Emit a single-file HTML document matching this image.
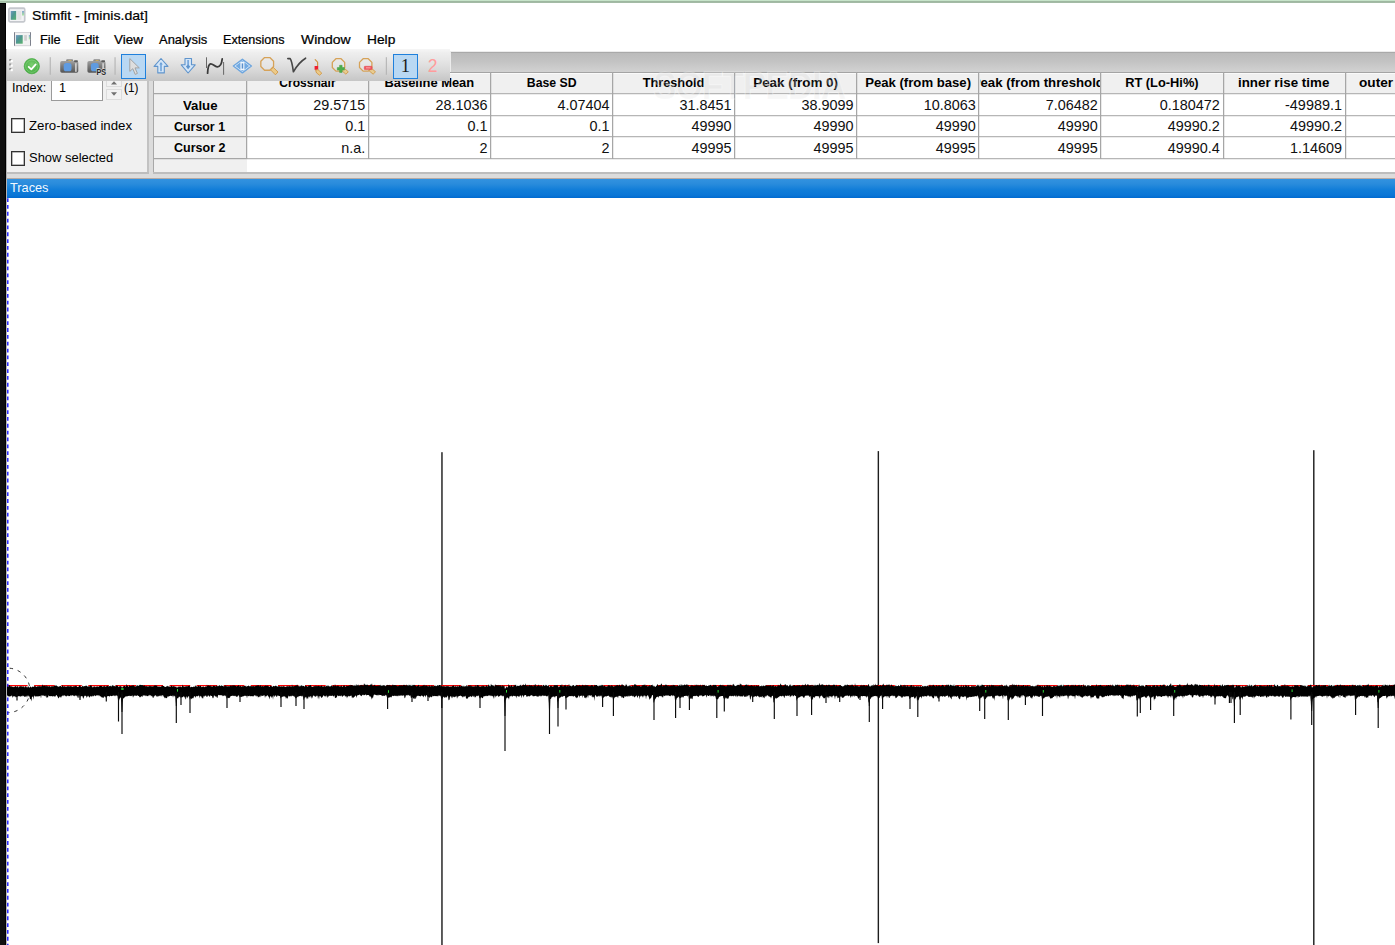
<!DOCTYPE html>
<html><head><meta charset="utf-8"><title>Stimfit - [minis.dat]</title>
<style>
html,body{margin:0;padding:0;}
body{width:1395px;height:945px;overflow:hidden;background:#fff;position:relative;font-family:"Liberation Sans",sans-serif;}
.t{position:absolute;white-space:nowrap;line-height:20px;height:20px;transform-origin:0 50%;font-family:"Liberation Sans",sans-serif;}
.a{position:absolute;}
svg{position:absolute;overflow:visible;}

</style></head>
<body>
<div class="a" style="left:0;top:0;width:1395px;height:1px;background:#c7e4ca;"></div><div class="a" style="left:0;top:1px;width:1395px;height:1px;background:#9fb8a1;"></div><div class="a" style="left:0;top:2px;width:1395px;height:1px;background:#a3bba5;"></div><div class="a" style="left:0;top:1px;width:6px;height:1px;background:#a6c0a8;"></div><div class="a" style="left:0;top:2px;width:6px;height:1px;background:#a9c6ac;"></div>
<div class="a" style="left:0;top:3px;width:6px;height:942px;background:#0f0f0f;border-right:1px solid #000;border-top:1px solid #000;box-sizing:border-box;"></div>
<div class="a" style="left:6px;top:49px;width:1px;height:896px;background:#b4b4b4;"></div>
<svg style="left:8px;top:7px" width="18" height="16" viewBox="0 0 18 16">
<defs><linearGradient id="gg" x1="0" y1="0" x2="1" y2="1"><stop offset="0" stop-color="#7399c2"/><stop offset="0.45" stop-color="#4f9692"/><stop offset="1" stop-color="#5bb36c"/></linearGradient>
<linearGradient id="gb" x1="0" y1="0" x2="0" y2="1"><stop offset="0" stop-color="#86a6d2"/><stop offset="0.7" stop-color="#a6dca8"/><stop offset="1" stop-color="#e8f4e8"/></linearGradient></defs>
<rect x="0.9" y="1.2" width="15.8" height="13.6" rx="1.2" fill="#f4f4f6" stroke="#c5c8cd" stroke-width="1.7"/>
<rect x="2" y="2.4" width="13.6" height="0.9" fill="#e2e4e8"/>
<rect x="2.7" y="4" width="5.5" height="8.8" fill="url(#gg)"/>
<rect x="9.2" y="4" width="4.2" height="8.8" fill="#e4e4e4"/>
<rect x="14" y="4" width="2.1" height="5.2" fill="url(#gb)"/>
</svg>
<div class="t" style="left:32.10px;top:6.23px;font-size:12.6px;color:#000;-webkit-text-stroke:0.22px #000;transform:scaleX(1.1195);">Stimfit - [minis.dat]</div>
<svg style="left:14px;top:32px" width="17" height="14" viewBox="0 0 17 14">
<rect x="0.5" y="0.5" width="16" height="13.2" fill="#f2f2f2" stroke="#d4d4d8" stroke-width="1"/>
<rect x="0" y="0.3" width="1" height="13.4" fill="#7c808c"/><rect x="16" y="0.3" width="1" height="13.4" fill="#7c808c"/>
<rect x="1.9" y="3.1" width="6.8" height="8.6" fill="url(#gg)"/>
<rect x="10.2" y="3.1" width="2.7" height="5.6" fill="#cfcfcf"/>
<rect x="14.8" y="3" width="1.4" height="5" fill="url(#gb)"/>
</svg>
<div class="t" style="left:40.00px;top:29.90px;font-size:12.4px;color:#000;-webkit-text-stroke:0.22px #000;transform:scaleX(1.0360);">File</div>
<div class="t" style="left:76.00px;top:29.90px;font-size:12.4px;color:#000;-webkit-text-stroke:0.22px #000;transform:scaleX(1.0764);">Edit</div>
<div class="t" style="left:114.30px;top:29.90px;font-size:12.4px;color:#000;-webkit-text-stroke:0.22px #000;transform:scaleX(1.0881);">View</div>
<div class="t" style="left:159.00px;top:29.90px;font-size:12.4px;color:#000;-webkit-text-stroke:0.22px #000;transform:scaleX(1.0461);">Analysis</div>
<div class="t" style="left:223.30px;top:29.90px;font-size:12.4px;color:#000;-webkit-text-stroke:0.22px #000;transform:scaleX(1.0172);">Extensions</div>
<div class="t" style="left:301.00px;top:29.90px;font-size:12.4px;color:#000;-webkit-text-stroke:0.22px #000;transform:scaleX(1.1269);">Window</div>
<div class="t" style="left:366.70px;top:29.90px;font-size:12.4px;color:#000;-webkit-text-stroke:0.22px #000;transform:scaleX(1.1097);">Help</div>
<div class="a" style="left:450px;top:51px;width:945px;height:21px;background:linear-gradient(#ececec 0,#ececec 1px,#a9a9a9 1px,#a9a9a9 2px,#bbbbbb 2px,#c3c3c3 50%,#d2d2d2 100%);border-left:1px solid #ececec;box-sizing:border-box;"></div>
<div class="a" style="left:7px;top:72px;width:1388px;height:107px;background:#dcdcdc;"></div>
<div class="a" style="left:7px;top:172px;width:1388px;height:2px;background:#bdbdbd;"></div>
<div class="a" style="left:7px;top:174px;width:1388px;height:4px;background:#dcdcdc;"></div>
<div class="a" style="left:7px;top:72px;width:140px;height:100px;background:#f0f0f0;border-right:2px solid #c2c2c2;"></div>
<div class="a" style="left:149px;top:172px;width:4px;height:2px;background:#dcdcdc;"></div><!-- gap patch -->
<div class="t" style="left:12.00px;top:77.70px;font-size:12.4px;color:#000;transform:scaleX(1.0184);">Index:</div>
<div class="a" style="left:51px;top:70px;width:52px;height:31px;background:#fff;border:1px solid #9a9a9a;box-sizing:border-box;"></div>
<div class="t" style="left:59.00px;top:77.63px;font-size:12.6px;color:#000;">1</div>
<div class="a" style="left:106px;top:72px;width:16px;height:15px;background:#f2f2f2;border:1px solid #dcdcdc;box-sizing:border-box;"></div>
<div class="a" style="left:106px;top:89px;width:16px;height:11px;background:#f2f2f2;border:1px solid #dcdcdc;box-sizing:border-box;"></div>
<svg style="left:106px;top:80px" width="16" height="20" viewBox="0 0 16 20"><path d="M5 4.5 L11 4.5 L8 1.2 Z" fill="#707070"/><path d="M5 12.3 L11 12.3 L8 15.8 Z" fill="#707070"/></svg>
<div class="t" style="left:124.40px;top:77.63px;font-size:12.6px;color:#000;transform:scaleX(0.9351);">(1)</div>
<div class="a" style="left:11px;top:118px;width:14px;height:15px;background:#fff;border:1px solid #333;box-shadow:inset 0 0 0 0.5px #777;box-sizing:border-box;"></div>
<div class="t" style="left:28.70px;top:115.67px;font-size:12.2px;color:#000;transform:scaleX(1.0870);">Zero-based index</div>
<div class="a" style="left:11px;top:151px;width:14px;height:15px;background:#fff;border:1px solid #333;box-shadow:inset 0 0 0 0.5px #777;box-sizing:border-box;"></div>
<div class="t" style="left:28.70px;top:148.37px;font-size:12.2px;color:#000;transform:scaleX(1.0624);">Show selected</div>
<div class="a" style="left:7px;top:178px;width:1388px;height:20px;background:linear-gradient(#3292e0 0,#2a8cdc 25%,#0f7cd8 60%,#0a76d6 85%,#006ad0 100%);border-top:1px solid #b4a9a4;box-sizing:border-box;"></div>
<div class="t" style="left:10.30px;top:177.70px;font-size:12.4px;color:#f2f8ff;transform:scaleX(1.0284);">Traces</div>
<div class="a" style="left:153px;top:72px;width:1242px;height:100.30000000000001px;background:#fff;overflow:hidden;" id="tbl">
<div class="a" style="left:0;top:0;width:1300px;height:21.599999999999994px;background:#f0f0f0;"></div>
<div class="a" style="left:0;top:0;width:93.5px;height:100px;background:#f0f0f0;"></div>
<div class="a" style="left:1px;top:1px;width:1300px;height:1px;background:#fafafa;"></div><!-- hdr highlight -->
<div class="a" style="left:0;top:0;width:1px;height:100px;background:#a8a8a8;"></div>
<div class="a" style="left:0;top:0;width:1300px;height:1px;background:#a4a4a4;"></div>
<div class="a" style="left:1px;top:21px;width:1300px;height:1px;background:#b6b6b6;"></div>
<div class="a" style="left:1px;top:21px;width:93px;height:1px;background:#a6a6a6;"></div>
<div class="a" style="left:1px;top:22px;width:1300px;height:1px;background:rgba(150,150,150,0.18);"></div>
<div class="a" style="left:1px;top:43px;width:1300px;height:1px;background:#b6b6b6;"></div>
<div class="a" style="left:1px;top:43px;width:93px;height:1px;background:#a6a6a6;"></div>
<div class="a" style="left:1px;top:44px;width:1300px;height:1px;background:rgba(150,150,150,0.18);"></div>
<div class="a" style="left:1px;top:64px;width:1300px;height:1px;background:#b6b6b6;"></div>
<div class="a" style="left:1px;top:64px;width:93px;height:1px;background:#a6a6a6;"></div>
<div class="a" style="left:1px;top:65px;width:1300px;height:1px;background:rgba(150,150,150,0.18);"></div>
<div class="a" style="left:1px;top:86px;width:1300px;height:1px;background:#b6b6b6;"></div>
<div class="a" style="left:1px;top:86px;width:93px;height:1px;background:#a6a6a6;"></div>
<div class="a" style="left:1px;top:87px;width:1300px;height:1px;background:rgba(150,150,150,0.18);"></div>
<div class="a" style="left:93px;top:0;width:1px;height:87px;background:#a6a6a6;"></div>
<div class="a" style="left:94px;top:0;width:1px;height:87px;background:rgba(150,150,150,0.2);"></div>
<div class="a" style="left:215px;top:0;width:1px;height:87px;background:#a6a6a6;"></div>
<div class="a" style="left:216px;top:0;width:1px;height:87px;background:rgba(150,150,150,0.2);"></div>
<div class="a" style="left:337px;top:0;width:1px;height:87px;background:#a6a6a6;"></div>
<div class="a" style="left:338px;top:0;width:1px;height:87px;background:rgba(150,150,150,0.2);"></div>
<div class="a" style="left:459px;top:0;width:1px;height:87px;background:#a6a6a6;"></div>
<div class="a" style="left:460px;top:0;width:1px;height:87px;background:rgba(150,150,150,0.2);"></div>
<div class="a" style="left:581px;top:0;width:1px;height:87px;background:#a6a6a6;"></div>
<div class="a" style="left:582px;top:0;width:1px;height:87px;background:rgba(150,150,150,0.2);"></div>
<div class="a" style="left:703px;top:0;width:1px;height:87px;background:#a6a6a6;"></div>
<div class="a" style="left:704px;top:0;width:1px;height:87px;background:rgba(150,150,150,0.2);"></div>
<div class="a" style="left:825px;top:0;width:1px;height:87px;background:#a6a6a6;"></div>
<div class="a" style="left:826px;top:0;width:1px;height:87px;background:rgba(150,150,150,0.2);"></div>
<div class="a" style="left:947px;top:0;width:1px;height:87px;background:#a6a6a6;"></div>
<div class="a" style="left:948px;top:0;width:1px;height:87px;background:rgba(150,150,150,0.2);"></div>
<div class="a" style="left:1070px;top:0;width:1px;height:87px;background:#a6a6a6;"></div>
<div class="a" style="left:1071px;top:0;width:1px;height:87px;background:rgba(150,150,150,0.2);"></div>
<div class="a" style="left:1192px;top:0;width:1px;height:87px;background:#a6a6a6;"></div>
<div class="a" style="left:1193px;top:0;width:1px;height:87px;background:rgba(150,150,150,0.2);"></div>
<div class="a" style="left:1314px;top:0;width:1px;height:87px;background:#a6a6a6;"></div>
<div class="a" style="left:1315px;top:0;width:1px;height:87px;background:rgba(150,150,150,0.2);"></div>
</div>
<div class="a" style="left:247.50px;top:73px;width:120.07px;height:19.60px;overflow:hidden;"><div class="t" style="left:31.56px;top:0.27px;width:56.96px;font-size:12.2px;font-weight:bold;transform-origin:50% 50%;transform:scaleX(0.9885);">Crosshair</div></div>
<div class="a" style="left:369.57px;top:73px;width:120.07px;height:19.60px;overflow:hidden;"><div class="t" style="left:17.66px;top:0.27px;width:84.76px;font-size:12.2px;font-weight:bold;transform-origin:50% 50%;transform:scaleX(1.0583);">Baseline Mean</div></div>
<div class="a" style="left:491.64px;top:73px;width:120.07px;height:19.60px;overflow:hidden;"><div class="t" style="left:35.28px;top:0.27px;width:49.50px;font-size:12.2px;font-weight:bold;transform-origin:50% 50%;transform:scaleX(1.0080);">Base SD</div></div>
<div class="a" style="left:613.71px;top:73px;width:120.07px;height:19.60px;overflow:hidden;"><div class="t" style="left:30.55px;top:0.27px;width:58.97px;font-size:12.2px;font-weight:bold;transform-origin:50% 50%;transform:scaleX(1.0463);">Threshold</div></div>
<div class="a" style="left:735.78px;top:73px;width:120.07px;height:19.60px;overflow:hidden;"><div class="t" style="left:21.39px;top:0.27px;width:77.29px;font-size:12.2px;font-weight:bold;transform-origin:50% 50%;transform:scaleX(1.0984);">Peak (from 0)</div></div>
<div class="a" style="left:857.85px;top:73px;width:120.07px;height:19.60px;overflow:hidden;"><div class="t" style="left:10.88px;top:0.27px;width:98.32px;font-size:12.2px;font-weight:bold;transform-origin:50% 50%;transform:scaleX(1.0782);">Peak (from base)</div></div>
<div class="a" style="left:979.92px;top:73px;width:120.07px;height:19.60px;overflow:hidden;"><div class="t" style="left:-3.01px;top:0.27px;width:126.09px;font-size:12.2px;font-weight:bold;transform-origin:50% 50%;transform:scaleX(1.0850);">Peak (from threshold)</div></div>
<div class="a" style="left:1101.99px;top:73px;width:120.07px;height:19.60px;overflow:hidden;"><div class="t" style="left:25.14px;top:0.27px;width:69.79px;font-size:12.2px;font-weight:bold;transform-origin:50% 50%;transform:scaleX(1.0531);">RT (Lo-Hi%)</div></div>
<div class="a" style="left:1224.06px;top:73px;width:120.07px;height:19.60px;overflow:hidden;"><div class="t" style="left:18.34px;top:0.27px;width:83.40px;font-size:12.2px;font-weight:bold;transform-origin:50% 50%;transform:scaleX(1.0959);">inner rise time</div></div>
<div class="a" style="left:1346.13px;top:73px;width:120.07px;height:19.60px;overflow:hidden;"><div class="t" style="left:18.00px;top:0.27px;width:84.07px;font-size:12.2px;font-weight:bold;transform-origin:50% 50%;transform:scaleX(1.1181);">outer rise time</div></div>
<div class="t" style="left:182.65px;top:95.67px;font-size:12.2px;color:#000;font-weight:bold;transform:scaleX(1.0854);">Value</div>
<div class="t" style="left:174.40px;top:117.07px;font-size:12.2px;color:#000;font-weight:bold;transform:scaleX(1.0185);">Cursor 1</div>
<div class="t" style="left:174.15px;top:138.27px;font-size:12.2px;color:#000;font-weight:bold;transform:scaleX(1.0285);">Cursor 2</div>
<div class="t" style="left:313.32px;top:94.91px;font-size:14.4px;color:#101010;">29.5715</div>
<div class="t" style="left:435.39px;top:94.91px;font-size:14.4px;color:#101010;">28.1036</div>
<div class="t" style="left:557.46px;top:94.91px;font-size:14.4px;color:#101010;">4.07404</div>
<div class="t" style="left:679.53px;top:94.91px;font-size:14.4px;color:#101010;">31.8451</div>
<div class="t" style="left:801.60px;top:94.91px;font-size:14.4px;color:#101010;">38.9099</div>
<div class="t" style="left:923.67px;top:94.91px;font-size:14.4px;color:#101010;">10.8063</div>
<div class="t" style="left:1045.74px;top:94.91px;font-size:14.4px;color:#101010;">7.06482</div>
<div class="t" style="left:1159.80px;top:94.91px;font-size:14.4px;color:#101010;">0.180472</div>
<div class="t" style="left:1285.08px;top:94.91px;font-size:14.4px;color:#101010;">-49989.1</div>
<div class="t" style="left:345.35px;top:116.31px;font-size:14.4px;color:#101010;">0.1</div>
<div class="t" style="left:467.42px;top:116.31px;font-size:14.4px;color:#101010;">0.1</div>
<div class="t" style="left:589.49px;top:116.31px;font-size:14.4px;color:#101010;">0.1</div>
<div class="t" style="left:691.54px;top:116.31px;font-size:14.4px;color:#101010;">49990</div>
<div class="t" style="left:813.61px;top:116.31px;font-size:14.4px;color:#101010;">49990</div>
<div class="t" style="left:935.68px;top:116.31px;font-size:14.4px;color:#101010;">49990</div>
<div class="t" style="left:1057.75px;top:116.31px;font-size:14.4px;color:#101010;">49990</div>
<div class="t" style="left:1167.81px;top:116.31px;font-size:14.4px;color:#101010;">49990.2</div>
<div class="t" style="left:1289.88px;top:116.31px;font-size:14.4px;color:#101010;">49990.2</div>
<div class="t" style="left:341.35px;top:137.51px;font-size:14.4px;color:#101010;">n.a.</div>
<div class="t" style="left:479.43px;top:137.51px;font-size:14.4px;color:#101010;">2</div>
<div class="t" style="left:601.50px;top:137.51px;font-size:14.4px;color:#101010;">2</div>
<div class="t" style="left:691.54px;top:137.51px;font-size:14.4px;color:#101010;">49995</div>
<div class="t" style="left:813.61px;top:137.51px;font-size:14.4px;color:#101010;">49995</div>
<div class="t" style="left:935.68px;top:137.51px;font-size:14.4px;color:#101010;">49995</div>
<div class="t" style="left:1057.75px;top:137.51px;font-size:14.4px;color:#101010;">49995</div>
<div class="t" style="left:1167.81px;top:137.51px;font-size:14.4px;color:#101010;">49990.4</div>
<div class="t" style="left:1289.88px;top:137.51px;font-size:14.4px;color:#101010;">1.14609</div>
<div class="t" style="left:653px;top:64px;height:44px;line-height:44px;font-size:38px;font-weight:bold;letter-spacing:-1.2px;color:rgba(170,170,170,0.10);-webkit-text-stroke:1.2px rgba(255,255,255,0.32);transform:scaleX(0.93);">SOFTPEDIA</div>
<svg style="left:0;top:0" width="1395" height="945" viewBox="0 0 1395 945"><rect x="441.05" y="452.2" width="1.8" height="493" fill="#4c4c4c"/><rect x="877.65" y="451.1" width="1.4" height="492" fill="#1e1e1e"/><rect x="1313.0" y="450.2" width="1.55" height="495" fill="#2e2e2e"/><path d="M7 685.6 H1395" stroke="#ff0000" stroke-width="1.2" stroke-dasharray="20.6 6.5" fill="none"/><clipPath id="cl"><rect x="7" y="198" width="1388" height="747"/></clipPath><circle cx="7.6" cy="690.4" r="22.3" fill="none" stroke="#1a1a1a" stroke-width="0.9" stroke-dasharray="3.4 4.8" clip-path="url(#cl)"/><path d="M7.8 198.15 V945" stroke="#1818ff" stroke-width="1.4" stroke-dasharray="3.8 3.04" fill="none"/><polygon fill="#000" points="7.0,686.9 7.5,686.5 8.0,686.4 8.5,687.1 9.0,685.1 9.5,685.0 10.0,686.2 10.5,685.9 11.0,687.0 11.5,685.8 12.0,687.1 12.5,686.4 13.0,687.2 13.5,687.0 14.0,686.8 14.5,687.0 15.0,686.2 15.5,686.2 16.0,686.1 16.5,687.3 17.0,686.5 17.5,686.3 18.0,686.2 18.5,687.4 19.0,687.2 19.5,686.6 20.0,685.8 20.5,686.5 21.0,686.3 21.5,686.0 22.0,687.3 22.5,686.4 23.0,686.3 23.5,686.8 24.0,686.3 24.5,687.6 25.0,687.0 25.5,686.2 26.0,686.0 26.5,687.3 27.0,687.3 27.5,687.6 28.0,686.2 28.5,686.4 29.0,687.6 29.5,687.7 30.0,686.6 30.5,686.4 31.0,687.3 31.5,687.6 32.0,686.9 32.5,686.6 33.0,686.8 33.5,687.0 34.0,686.4 34.5,686.3 35.0,685.6 35.5,686.5 36.0,686.5 36.5,687.1 37.0,686.9 37.5,686.1 38.0,686.4 38.5,686.4 39.0,685.2 39.5,686.2 40.0,686.6 40.5,685.9 41.0,686.8 41.5,685.9 42.0,686.3 42.5,684.2 43.0,685.5 43.5,686.3 44.0,685.2 44.5,685.8 45.0,685.7 45.5,685.5 46.0,686.7 46.5,684.8 47.0,686.8 47.5,686.1 48.0,685.7 48.5,686.5 49.0,686.8 49.5,686.1 50.0,685.8 50.5,686.9 51.0,687.2 51.5,686.0 52.0,686.3 52.5,686.6 53.0,686.0 53.5,686.5 54.0,686.0 54.5,685.6 55.0,685.7 55.5,685.5 56.0,685.5 56.5,685.5 57.0,685.8 57.5,686.6 58.0,686.2 58.5,687.2 59.0,686.0 59.5,686.5 60.0,686.3 60.5,685.7 61.0,686.3 61.5,687.1 62.0,686.6 62.5,685.0 63.0,686.1 63.5,686.5 64.0,686.8 64.5,686.0 65.0,686.4 65.5,686.8 66.0,686.5 66.5,686.7 67.0,686.6 67.5,685.5 68.0,687.0 68.5,685.9 69.0,685.5 69.5,686.8 70.0,686.2 70.5,686.3 71.0,685.9 71.5,686.5 72.0,686.4 72.5,687.0 73.0,686.6 73.5,686.6 74.0,685.9 74.5,686.3 75.0,686.4 75.5,685.5 76.0,686.2 76.5,685.6 77.0,686.9 77.5,687.0 78.0,687.0 78.5,686.8 79.0,686.2 79.5,684.9 80.0,685.8 80.5,685.8 81.0,686.9 81.5,687.0 82.0,686.4 82.5,685.5 83.0,686.5 83.5,686.4 84.0,685.9 84.5,685.9 85.0,686.6 85.5,685.5 86.0,686.0 86.5,685.6 87.0,685.9 87.5,686.9 88.0,685.8 88.5,686.7 89.0,686.2 89.5,686.6 90.0,685.9 90.5,685.6 91.0,684.8 91.5,686.1 92.0,686.5 92.5,687.3 93.0,687.5 93.5,686.3 94.0,687.2 94.5,686.2 95.0,686.3 95.5,687.2 96.0,686.9 96.5,686.7 97.0,685.9 97.5,686.8 98.0,686.6 98.5,686.9 99.0,686.4 99.5,686.1 100.0,686.0 100.5,685.8 101.0,686.3 101.5,686.0 102.0,685.8 102.5,687.1 103.0,686.7 103.5,685.7 104.0,687.1 104.5,685.6 105.0,685.8 105.5,686.9 106.0,686.5 106.5,686.2 107.0,685.8 107.5,686.0 108.0,685.5 108.5,686.5 109.0,686.4 109.5,686.1 110.0,686.1 110.5,686.2 111.0,685.2 111.5,686.4 112.0,686.6 112.5,684.8 113.0,685.4 113.5,685.5 114.0,686.5 114.5,685.9 115.0,685.8 115.5,686.8 116.0,685.5 116.5,685.8 117.0,685.1 117.5,685.7 118.0,686.2 118.5,687.2 119.0,686.4 119.5,686.2 120.0,686.5 120.5,686.1 121.0,686.3 121.5,686.7 122.0,687.8 122.5,687.3 123.0,686.7 123.5,686.3 124.0,685.9 124.5,685.9 125.0,685.7 125.5,686.8 126.0,686.6 126.5,683.7 127.0,686.1 127.5,685.3 128.0,686.1 128.5,686.9 129.0,686.3 129.5,684.7 130.0,685.9 130.5,686.0 131.0,686.0 131.5,685.6 132.0,685.9 132.5,685.2 133.0,685.6 133.5,685.3 134.0,685.8 134.5,686.2 135.0,686.4 135.5,686.3 136.0,686.7 136.5,685.8 137.0,685.1 137.5,685.4 138.0,685.7 138.5,686.1 139.0,685.3 139.5,685.3 140.0,684.6 140.5,685.1 141.0,685.1 141.5,685.1 142.0,685.2 142.5,685.1 143.0,685.3 143.5,686.3 144.0,685.1 144.5,685.5 145.0,686.0 145.5,686.1 146.0,686.7 146.5,685.7 147.0,686.2 147.5,686.4 148.0,686.5 148.5,686.7 149.0,685.3 149.5,686.0 150.0,686.6 150.5,685.7 151.0,686.4 151.5,685.9 152.0,686.8 152.5,686.4 153.0,685.8 153.5,686.5 154.0,686.0 154.5,685.5 155.0,685.3 155.5,685.5 156.0,685.6 156.5,685.8 157.0,685.6 157.5,686.7 158.0,686.6 158.5,687.0 159.0,686.0 159.5,686.8 160.0,687.0 160.5,686.6 161.0,686.9 161.5,685.9 162.0,685.5 162.5,685.7 163.0,686.0 163.5,685.9 164.0,686.1 164.5,686.8 165.0,686.9 165.5,687.0 166.0,686.8 166.5,686.6 167.0,686.1 167.5,685.8 168.0,686.7 168.5,686.0 169.0,687.1 169.5,686.6 170.0,686.3 170.5,687.2 171.0,685.4 171.5,685.6 172.0,686.2 172.5,686.8 173.0,685.9 173.5,685.9 174.0,686.8 174.5,686.1 175.0,687.0 175.5,686.8 176.0,686.6 176.5,687.7 177.0,686.7 177.5,687.6 178.0,687.4 178.5,686.3 179.0,686.9 179.5,686.3 180.0,687.1 180.5,686.3 181.0,686.9 181.5,687.2 182.0,686.4 182.5,684.6 183.0,686.6 183.5,686.5 184.0,686.0 184.5,686.8 185.0,687.3 185.5,686.1 186.0,686.5 186.5,685.8 187.0,687.1 187.5,686.1 188.0,686.0 188.5,686.1 189.0,685.8 189.5,685.6 190.0,686.5 190.5,687.5 191.0,687.0 191.5,686.8 192.0,687.0 192.5,687.0 193.0,687.3 193.5,686.3 194.0,686.9 194.5,687.0 195.0,685.5 195.5,685.6 196.0,686.8 196.5,686.5 197.0,685.5 197.5,687.1 198.0,686.2 198.5,685.5 199.0,685.4 199.5,686.6 200.0,686.2 200.5,685.6 201.0,686.2 201.5,687.2 202.0,687.1 202.5,687.0 203.0,686.3 203.5,686.4 204.0,687.0 204.5,687.1 205.0,687.2 205.5,686.0 206.0,687.0 206.5,686.5 207.0,684.4 207.5,686.3 208.0,685.3 208.5,685.5 209.0,685.6 209.5,686.1 210.0,685.4 210.5,685.4 211.0,686.7 211.5,686.5 212.0,685.6 212.5,686.9 213.0,686.3 213.5,685.7 214.0,685.6 214.5,686.3 215.0,685.5 215.5,686.6 216.0,686.4 216.5,685.1 217.0,686.4 217.5,686.1 218.0,686.1 218.5,686.3 219.0,685.2 219.5,685.0 220.0,686.3 220.5,686.1 221.0,685.6 221.5,685.6 222.0,685.6 222.5,686.1 223.0,686.0 223.5,686.8 224.0,685.3 224.5,686.4 225.0,685.3 225.5,685.3 226.0,686.5 226.5,686.2 227.0,685.0 227.5,686.6 228.0,686.7 228.5,686.1 229.0,686.3 229.5,686.5 230.0,685.6 230.5,685.4 231.0,686.1 231.5,685.3 232.0,686.5 232.5,685.0 233.0,685.8 233.5,685.4 234.0,685.1 234.5,685.8 235.0,685.2 235.5,686.0 236.0,686.0 236.5,686.5 237.0,686.0 237.5,685.8 238.0,686.2 238.5,685.1 239.0,685.0 239.5,686.5 240.0,686.3 240.5,685.5 241.0,686.6 241.5,686.8 242.0,686.3 242.5,686.5 243.0,685.3 243.5,686.5 244.0,686.0 244.5,685.7 245.0,686.2 245.5,686.3 246.0,685.3 246.5,686.9 247.0,686.2 247.5,686.0 248.0,686.3 248.5,685.2 249.0,686.1 249.5,686.0 250.0,686.9 250.5,685.6 251.0,686.2 251.5,686.2 252.0,686.1 252.5,686.6 253.0,685.8 253.5,685.9 254.0,686.5 254.5,686.4 255.0,685.6 255.5,685.9 256.0,686.3 256.5,685.5 257.0,685.5 257.5,685.2 258.0,685.8 258.5,685.2 259.0,685.1 259.5,686.4 260.0,685.7 260.5,685.3 261.0,685.4 261.5,686.5 262.0,686.5 262.5,686.1 263.0,685.9 263.5,686.4 264.0,686.2 264.5,686.0 265.0,686.1 265.5,685.5 266.0,685.5 266.5,685.7 267.0,685.9 267.5,685.6 268.0,685.7 268.5,685.8 269.0,687.1 269.5,687.1 270.0,686.1 270.5,685.4 271.0,686.2 271.5,685.9 272.0,686.4 272.5,687.0 273.0,686.2 273.5,685.7 274.0,686.2 274.5,686.3 275.0,686.1 275.5,685.8 276.0,685.5 276.5,686.4 277.0,685.7 277.5,686.8 278.0,686.7 278.5,685.7 279.0,686.8 279.5,685.9 280.0,686.3 280.5,686.4 281.0,686.9 281.5,685.7 282.0,686.9 282.5,686.3 283.0,686.7 283.5,686.2 284.0,685.6 284.5,686.8 285.0,686.9 285.5,686.9 286.0,686.8 286.5,686.8 287.0,685.6 287.5,686.8 288.0,685.4 288.5,686.9 289.0,685.5 289.5,686.0 290.0,686.4 290.5,686.2 291.0,686.5 291.5,686.7 292.0,684.3 292.5,686.0 293.0,686.5 293.5,686.2 294.0,685.9 294.5,685.9 295.0,686.3 295.5,685.7 296.0,685.1 296.5,686.0 297.0,684.5 297.5,684.9 298.0,686.2 298.5,685.8 299.0,686.4 299.5,686.4 300.0,685.1 300.5,686.3 301.0,686.3 301.5,685.2 302.0,684.9 302.5,686.2 303.0,686.0 303.5,685.8 304.0,686.3 304.5,686.4 305.0,686.6 305.5,685.1 306.0,685.8 306.5,686.3 307.0,686.1 307.5,686.8 308.0,686.7 308.5,685.1 309.0,686.3 309.5,685.3 310.0,685.3 310.5,685.1 311.0,685.5 311.5,686.6 312.0,687.0 312.5,687.0 313.0,686.6 313.5,686.4 314.0,686.3 314.5,686.3 315.0,685.8 315.5,685.6 316.0,686.8 316.5,685.5 317.0,686.0 317.5,686.2 318.0,685.7 318.5,685.8 319.0,685.9 319.5,686.3 320.0,685.9 320.5,686.2 321.0,686.2 321.5,685.6 322.0,685.4 322.5,686.4 323.0,686.9 323.5,686.5 324.0,685.8 324.5,686.3 325.0,686.2 325.5,686.6 326.0,686.4 326.5,685.7 327.0,685.5 327.5,685.6 328.0,686.8 328.5,685.2 329.0,685.9 329.5,686.6 330.0,686.6 330.5,686.4 331.0,685.7 331.5,685.4 332.0,685.6 332.5,686.6 333.0,686.0 333.5,685.1 334.0,685.8 334.5,686.2 335.0,684.1 335.5,685.6 336.0,685.9 336.5,686.2 337.0,685.8 337.5,685.9 338.0,684.8 338.5,686.2 339.0,685.8 339.5,686.4 340.0,686.4 340.5,686.2 341.0,685.9 341.5,685.2 342.0,686.8 342.5,686.7 343.0,686.4 343.5,685.4 344.0,685.3 344.5,685.3 345.0,686.4 345.5,686.4 346.0,686.7 346.5,685.2 347.0,685.9 347.5,686.1 348.0,685.8 348.5,686.1 349.0,685.3 349.5,685.1 350.0,686.6 350.5,684.7 351.0,684.9 351.5,685.1 352.0,685.5 352.5,685.6 353.0,685.0 353.5,685.9 354.0,684.9 354.5,686.0 355.0,684.6 355.5,685.5 356.0,686.2 356.5,684.4 357.0,684.6 357.5,685.6 358.0,685.0 358.5,684.6 359.0,686.1 359.5,685.0 360.0,686.1 360.5,684.7 361.0,685.3 361.5,685.3 362.0,684.6 362.5,685.4 363.0,685.4 363.5,685.8 364.0,683.3 364.5,683.9 365.0,684.7 365.5,684.7 366.0,684.8 366.5,685.3 367.0,684.2 367.5,684.9 368.0,684.8 368.5,686.0 369.0,684.8 369.5,686.0 370.0,684.8 370.5,684.4 371.0,684.8 371.5,684.4 372.0,683.3 372.5,685.7 373.0,685.9 373.5,685.4 374.0,685.5 374.5,684.9 375.0,684.6 375.5,685.9 376.0,686.0 376.5,686.0 377.0,685.5 377.5,685.8 378.0,685.8 378.5,685.2 379.0,686.0 379.5,684.9 380.0,685.7 380.5,684.6 381.0,686.0 381.5,685.7 382.0,684.9 382.5,685.6 383.0,686.1 383.5,684.9 384.0,685.0 384.5,685.2 385.0,686.0 385.5,686.3 386.0,685.1 386.5,685.4 387.0,685.6 387.5,684.7 388.0,685.1 388.5,685.0 389.0,685.7 389.5,685.0 390.0,684.8 390.5,685.9 391.0,684.8 391.5,685.9 392.0,685.7 392.5,684.8 393.0,684.6 393.5,685.5 394.0,685.0 394.5,685.2 395.0,684.9 395.5,685.0 396.0,685.8 396.5,685.5 397.0,685.5 397.5,686.4 398.0,685.3 398.5,686.3 399.0,685.6 399.5,685.3 400.0,685.5 400.5,685.5 401.0,685.2 401.5,685.1 402.0,686.3 402.5,685.5 403.0,684.9 403.5,685.3 404.0,684.6 404.5,685.2 405.0,685.0 405.5,685.3 406.0,686.2 406.5,684.5 407.0,685.1 407.5,685.0 408.0,686.0 408.5,685.3 409.0,684.6 409.5,685.4 410.0,684.8 410.5,684.9 411.0,686.3 411.5,685.8 412.0,684.6 412.5,685.8 413.0,684.8 413.5,685.0 414.0,685.4 414.5,684.8 415.0,685.1 415.5,685.4 416.0,686.3 416.5,686.2 417.0,686.0 417.5,686.1 418.0,685.5 418.5,685.1 419.0,684.7 419.5,686.5 420.0,686.4 420.5,686.1 421.0,685.7 421.5,686.0 422.0,686.3 422.5,685.6 423.0,685.9 423.5,685.3 424.0,684.7 424.5,684.9 425.0,686.4 425.5,685.0 426.0,686.0 426.5,685.0 427.0,686.1 427.5,685.8 428.0,686.7 428.5,686.3 429.0,685.0 429.5,685.5 430.0,686.6 430.5,686.3 431.0,686.2 431.5,685.0 432.0,686.8 432.5,685.6 433.0,686.1 433.5,686.4 434.0,685.3 434.5,686.0 435.0,685.7 435.5,685.6 436.0,686.5 436.5,685.8 437.0,686.1 437.5,684.7 438.0,685.8 438.5,685.4 439.0,685.0 439.5,685.1 440.0,685.1 440.5,685.0 441.0,686.8 441.5,685.0 442.0,686.1 442.5,686.4 443.0,687.0 443.5,685.6 444.0,686.5 444.5,686.1 445.0,686.7 445.5,686.7 446.0,685.4 446.5,686.4 447.0,686.2 447.5,686.0 448.0,686.5 448.5,685.7 449.0,687.0 449.5,686.5 450.0,686.7 450.5,687.0 451.0,685.5 451.5,687.0 452.0,686.6 452.5,685.7 453.0,685.7 453.5,685.6 454.0,685.5 454.5,687.1 455.0,686.4 455.5,686.5 456.0,685.1 456.5,687.0 457.0,687.1 457.5,685.3 458.0,686.9 458.5,686.5 459.0,685.8 459.5,685.2 460.0,685.9 460.5,686.6 461.0,685.8 461.5,685.8 462.0,685.9 462.5,686.8 463.0,685.3 463.5,687.0 464.0,685.2 464.5,687.0 465.0,686.0 465.5,686.0 466.0,686.9 466.5,685.0 467.0,685.6 467.5,686.7 468.0,685.2 468.5,685.5 469.0,686.5 469.5,685.3 470.0,685.3 470.5,685.3 471.0,686.8 471.5,685.2 472.0,686.6 472.5,686.6 473.0,686.1 473.5,686.8 474.0,686.3 474.5,686.8 475.0,685.2 475.5,685.3 476.0,687.1 476.5,685.9 477.0,685.0 477.5,685.0 478.0,685.4 478.5,684.9 479.0,686.4 479.5,686.8 480.0,685.4 480.5,686.9 481.0,686.5 481.5,685.7 482.0,686.7 482.5,685.3 483.0,686.6 483.5,685.6 484.0,686.1 484.5,686.4 485.0,686.6 485.5,686.7 486.0,685.6 486.5,685.0 487.0,686.4 487.5,686.4 488.0,685.7 488.5,684.6 489.0,684.7 489.5,685.7 490.0,686.5 490.5,686.1 491.0,683.6 491.5,685.1 492.0,684.9 492.5,685.4 493.0,685.0 493.5,685.4 494.0,686.2 494.5,686.4 495.0,684.6 495.5,684.6 496.0,686.0 496.5,685.1 497.0,685.1 497.5,685.0 498.0,686.2 498.5,684.7 499.0,685.4 499.5,684.8 500.0,686.6 500.5,684.9 501.0,685.5 501.5,685.9 502.0,686.7 502.5,684.8 503.0,685.9 503.5,686.2 504.0,685.3 504.5,686.3 505.0,689.2 505.5,687.8 506.0,687.8 506.5,686.3 507.0,687.2 507.5,687.4 508.0,686.7 508.5,684.2 509.0,684.8 509.5,685.7 510.0,686.2 510.5,686.4 511.0,685.8 511.5,685.1 512.0,685.4 512.5,686.7 513.0,686.7 513.5,686.3 514.0,684.6 514.5,685.9 515.0,684.7 515.5,685.3 516.0,684.6 516.5,686.6 517.0,686.2 517.5,685.7 518.0,685.6 518.5,686.1 519.0,685.9 519.5,685.5 520.0,685.5 520.5,685.1 521.0,684.5 521.5,686.1 522.0,685.7 522.5,685.4 523.0,684.6 523.5,684.5 524.0,685.1 524.5,685.3 525.0,684.9 525.5,683.3 526.0,685.6 526.5,686.0 527.0,684.6 527.5,685.4 528.0,686.4 528.5,685.8 529.0,684.6 529.5,685.6 530.0,685.0 530.5,686.1 531.0,685.0 531.5,685.2 532.0,686.0 532.5,685.4 533.0,686.4 533.5,686.0 534.0,684.6 534.5,685.1 535.0,686.3 535.5,683.9 536.0,684.5 536.5,686.5 537.0,686.0 537.5,685.6 538.0,686.3 538.5,684.8 539.0,684.8 539.5,686.2 540.0,685.8 540.5,685.4 541.0,686.4 541.5,685.1 542.0,685.7 542.5,686.4 543.0,685.3 543.5,685.1 544.0,684.8 544.5,686.1 545.0,685.7 545.5,684.5 546.0,686.1 546.5,684.8 547.0,685.2 547.5,686.2 548.0,685.7 548.5,684.8 549.0,686.0 549.5,687.4 550.0,686.2 550.5,685.9 551.0,685.5 551.5,686.0 552.0,686.5 552.5,686.5 553.0,686.7 553.5,686.2 554.0,684.9 554.5,685.5 555.0,684.7 555.5,685.5 556.0,685.0 556.5,685.4 557.0,684.8 557.5,685.2 558.0,686.0 558.5,687.4 559.0,686.3 559.5,687.0 560.0,685.9 560.5,685.0 561.0,684.9 561.5,686.0 562.0,683.6 562.5,686.6 563.0,685.9 563.5,686.5 564.0,685.5 564.5,685.3 565.0,685.4 565.5,684.6 566.0,686.4 566.5,686.2 567.0,685.4 567.5,685.2 568.0,686.5 568.5,686.0 569.0,683.5 569.5,686.1 570.0,685.8 570.5,685.4 571.0,686.2 571.5,686.5 572.0,685.3 572.5,685.7 573.0,685.3 573.5,684.9 574.0,685.2 574.5,686.4 575.0,685.8 575.5,686.1 576.0,684.7 576.5,685.4 577.0,684.7 577.5,686.1 578.0,684.8 578.5,686.1 579.0,685.7 579.5,684.7 580.0,685.7 580.5,685.9 581.0,685.0 581.5,686.2 582.0,685.6 582.5,684.6 583.0,685.5 583.5,685.5 584.0,685.2 584.5,685.5 585.0,685.7 585.5,684.5 586.0,686.0 586.5,685.1 587.0,684.9 587.5,685.5 588.0,685.2 588.5,685.4 589.0,686.4 589.5,685.9 590.0,685.4 590.5,686.3 591.0,685.3 591.5,685.1 592.0,685.8 592.5,684.8 593.0,686.3 593.5,686.3 594.0,685.9 594.5,685.0 595.0,684.7 595.5,685.4 596.0,685.1 596.5,685.1 597.0,684.9 597.5,686.0 598.0,685.9 598.5,686.5 599.0,684.9 599.5,686.3 600.0,684.9 600.5,685.5 601.0,686.1 601.5,684.9 602.0,684.7 602.5,685.1 603.0,685.4 603.5,686.4 604.0,685.1 604.5,686.1 605.0,686.0 605.5,686.5 606.0,686.6 606.5,686.5 607.0,686.4 607.5,686.3 608.0,685.6 608.5,685.3 609.0,685.3 609.5,685.2 610.0,686.2 610.5,686.2 611.0,685.3 611.5,685.0 612.0,686.6 612.5,685.4 613.0,685.7 613.5,686.4 614.0,687.1 614.5,685.8 615.0,685.4 615.5,686.2 616.0,684.9 616.5,685.7 617.0,684.8 617.5,685.3 618.0,685.3 618.5,686.3 619.0,684.8 619.5,684.8 620.0,685.6 620.5,686.1 621.0,685.7 621.5,685.0 622.0,683.8 622.5,684.7 623.0,685.6 623.5,685.0 624.0,686.1 624.5,686.3 625.0,684.8 625.5,686.2 626.0,683.6 626.5,685.1 627.0,685.2 627.5,686.6 628.0,686.2 628.5,686.2 629.0,685.2 629.5,685.3 630.0,686.5 630.5,685.5 631.0,686.6 631.5,686.6 632.0,686.1 632.5,685.2 633.0,685.7 633.5,686.4 634.0,684.7 634.5,684.3 635.0,684.5 635.5,684.6 636.0,684.6 636.5,685.5 637.0,686.1 637.5,685.9 638.0,685.4 638.5,686.2 639.0,685.3 639.5,686.1 640.0,685.7 640.5,686.6 641.0,686.5 641.5,686.3 642.0,685.0 642.5,685.7 643.0,684.7 643.5,685.6 644.0,684.5 644.5,685.4 645.0,684.1 645.5,685.8 646.0,686.1 646.5,685.6 647.0,685.0 647.5,686.4 648.0,686.5 648.5,686.0 649.0,685.9 649.5,684.7 650.0,686.6 650.5,685.7 651.0,685.2 651.5,685.1 652.0,685.1 652.5,684.6 653.0,686.5 653.5,685.3 654.0,687.1 654.5,685.6 655.0,687.0 655.5,687.0 656.0,686.1 656.5,685.8 657.0,685.2 657.5,683.8 658.0,685.1 658.5,686.3 659.0,685.3 659.5,685.0 660.0,685.9 660.5,684.8 661.0,684.4 661.5,683.3 662.0,684.5 662.5,686.3 663.0,686.2 663.5,685.6 664.0,684.9 664.5,685.7 665.0,685.4 665.5,684.8 666.0,684.2 666.5,685.0 667.0,685.3 667.5,686.0 668.0,684.7 668.5,685.5 669.0,686.4 669.5,685.4 670.0,686.1 670.5,685.4 671.0,685.8 671.5,685.3 672.0,685.8 672.5,685.8 673.0,684.4 673.5,685.2 674.0,685.3 674.5,685.1 675.0,685.7 675.5,685.3 676.0,686.8 676.5,685.4 677.0,685.9 677.5,684.9 678.0,686.2 678.5,685.5 679.0,685.2 679.5,684.4 680.0,686.0 680.5,685.6 681.0,683.8 681.5,685.0 682.0,685.7 682.5,684.6 683.0,685.8 683.5,684.9 684.0,684.9 684.5,684.3 685.0,685.1 685.5,685.6 686.0,684.3 686.5,684.8 687.0,684.6 687.5,684.5 688.0,686.3 688.5,684.4 689.0,686.3 689.5,686.4 690.0,686.6 690.5,685.9 691.0,684.8 691.5,685.2 692.0,686.0 692.5,685.3 693.0,685.2 693.5,686.0 694.0,686.0 694.5,685.9 695.0,684.3 695.5,685.7 696.0,685.5 696.5,684.3 697.0,685.9 697.5,685.2 698.0,684.4 698.5,685.5 699.0,685.7 699.5,684.9 700.0,686.2 700.5,684.6 701.0,685.1 701.5,686.1 702.0,686.2 702.5,684.5 703.0,685.2 703.5,684.7 704.0,685.6 704.5,684.5 705.0,685.8 705.5,685.9 706.0,685.3 706.5,685.5 707.0,686.0 707.5,686.0 708.0,685.9 708.5,685.6 709.0,685.2 709.5,685.5 710.0,685.1 710.5,684.8 711.0,685.3 711.5,685.4 712.0,685.8 712.5,686.2 713.0,684.9 713.5,684.8 714.0,685.4 714.5,685.1 715.0,684.7 715.5,685.1 716.0,684.9 716.5,685.7 717.0,686.7 717.5,687.0 718.0,685.8 718.5,686.0 719.0,686.4 719.5,685.0 720.0,685.3 720.5,684.5 721.0,685.6 721.5,685.1 722.0,685.8 722.5,685.6 723.0,684.4 723.5,686.1 724.0,685.4 724.5,686.0 725.0,685.7 725.5,685.9 726.0,686.5 726.5,686.1 727.0,685.8 727.5,684.5 728.0,685.7 728.5,684.4 729.0,685.9 729.5,684.4 730.0,685.9 730.5,684.6 731.0,685.2 731.5,686.2 732.0,684.6 732.5,686.0 733.0,683.5 733.5,684.6 734.0,684.6 734.5,685.5 735.0,686.2 735.5,685.9 736.0,685.8 736.5,685.7 737.0,685.0 737.5,685.2 738.0,684.6 738.5,684.9 739.0,684.9 739.5,685.7 740.0,683.0 740.5,684.6 741.0,683.9 741.5,684.6 742.0,686.3 742.5,685.6 743.0,685.3 743.5,686.3 744.0,686.1 744.5,685.7 745.0,685.3 745.5,685.1 746.0,684.6 746.5,684.5 747.0,685.1 747.5,686.0 748.0,684.0 748.5,685.8 749.0,685.9 749.5,686.1 750.0,685.5 750.5,685.9 751.0,685.3 751.5,685.0 752.0,686.0 752.5,685.4 753.0,685.9 753.5,685.4 754.0,686.4 754.5,685.1 755.0,685.8 755.5,686.6 756.0,685.6 756.5,685.5 757.0,685.5 757.5,686.0 758.0,686.1 758.5,684.9 759.0,686.1 759.5,686.6 760.0,686.1 760.5,686.0 761.0,686.5 761.5,685.8 762.0,685.2 762.5,686.4 763.0,685.7 763.5,685.3 764.0,686.3 764.5,686.1 765.0,685.5 765.5,685.4 766.0,685.5 766.5,685.6 767.0,685.6 767.5,685.7 768.0,685.3 768.5,685.7 769.0,685.3 769.5,685.6 770.0,685.8 770.5,685.3 771.0,684.9 771.5,686.5 772.0,685.5 772.5,686.0 773.0,684.9 773.5,684.9 774.0,686.4 774.5,686.3 775.0,686.3 775.5,685.9 776.0,686.0 776.5,686.7 777.0,685.9 777.5,686.2 778.0,684.6 778.5,685.5 779.0,685.6 779.5,685.7 780.0,685.0 780.5,683.3 781.0,684.5 781.5,684.9 782.0,685.8 782.5,686.2 783.0,684.8 783.5,685.7 784.0,686.2 784.5,684.7 785.0,684.4 785.5,684.2 786.0,684.7 786.5,686.0 787.0,684.9 787.5,685.3 788.0,685.7 788.5,686.4 789.0,686.0 789.5,684.9 790.0,684.4 790.5,684.5 791.0,686.3 791.5,685.9 792.0,685.1 792.5,685.4 793.0,686.3 793.5,685.3 794.0,685.3 794.5,685.0 795.0,685.6 795.5,686.0 796.0,686.0 796.5,685.4 797.0,685.8 797.5,685.4 798.0,685.1 798.5,686.1 799.0,684.7 799.5,685.6 800.0,685.3 800.5,686.3 801.0,685.9 801.5,685.8 802.0,684.9 802.5,684.4 803.0,686.0 803.5,684.7 804.0,685.4 804.5,685.2 805.0,684.4 805.5,683.5 806.0,685.8 806.5,685.8 807.0,684.9 807.5,684.3 808.0,684.6 808.5,684.5 809.0,685.7 809.5,685.2 810.0,685.8 810.5,685.2 811.0,685.1 811.5,684.8 812.0,686.8 812.5,684.7 813.0,685.0 813.5,686.3 814.0,684.4 814.5,685.5 815.0,685.5 815.5,684.6 816.0,686.1 816.5,684.9 817.0,684.9 817.5,685.0 818.0,684.4 818.5,684.9 819.0,685.4 819.5,682.7 820.0,684.3 820.5,685.8 821.0,684.8 821.5,684.7 822.0,684.3 822.5,684.6 823.0,684.4 823.5,684.9 824.0,685.7 824.5,685.0 825.0,685.4 825.5,686.1 826.0,684.7 826.5,684.9 827.0,684.8 827.5,685.9 828.0,685.0 828.5,684.5 829.0,685.6 829.5,684.7 830.0,684.8 830.5,685.8 831.0,685.5 831.5,685.7 832.0,685.0 832.5,685.4 833.0,685.4 833.5,684.5 834.0,684.7 834.5,685.1 835.0,684.6 835.5,686.4 836.0,685.6 836.5,684.6 837.0,686.5 837.5,685.4 838.0,686.2 838.5,685.9 839.0,684.9 839.5,685.8 840.0,685.1 840.5,685.1 841.0,685.9 841.5,685.7 842.0,686.2 842.5,686.7 843.0,685.7 843.5,686.4 844.0,685.8 844.5,685.6 845.0,684.6 845.5,685.0 846.0,685.5 846.5,685.2 847.0,684.4 847.5,684.6 848.0,685.2 848.5,685.0 849.0,685.3 849.5,686.1 850.0,684.6 850.5,685.4 851.0,685.7 851.5,684.3 852.0,685.8 852.5,684.3 853.0,685.3 853.5,686.1 854.0,685.9 854.5,686.4 855.0,682.9 855.5,685.3 856.0,686.2 856.5,684.9 857.0,686.6 857.5,685.4 858.0,685.2 858.5,686.6 859.0,686.4 859.5,686.5 860.0,685.5 860.5,685.3 861.0,686.1 861.5,684.6 862.0,686.2 862.5,684.8 863.0,686.3 863.5,684.8 864.0,685.2 864.5,685.0 865.0,685.7 865.5,686.2 866.0,685.3 866.5,685.8 867.0,685.4 867.5,686.0 868.0,685.1 868.5,683.8 869.0,685.0 869.5,686.8 870.0,685.5 870.5,687.1 871.0,685.2 871.5,686.0 872.0,685.0 872.5,685.0 873.0,686.4 873.5,684.5 874.0,684.6 874.5,685.6 875.0,685.5 875.5,683.6 876.0,685.8 876.5,685.0 877.0,685.3 877.5,684.5 878.0,685.9 878.5,685.3 879.0,686.2 879.5,685.5 880.0,686.1 880.5,684.8 881.0,685.5 881.5,686.0 882.0,686.0 882.5,684.2 883.0,685.2 883.5,683.3 884.0,684.9 884.5,685.7 885.0,685.6 885.5,685.8 886.0,685.6 886.5,685.0 887.0,684.3 887.5,685.5 888.0,684.5 888.5,685.3 889.0,684.0 889.5,684.7 890.0,686.0 890.5,686.2 891.0,684.5 891.5,684.7 892.0,685.1 892.5,685.9 893.0,685.9 893.5,686.1 894.0,686.2 894.5,685.9 895.0,686.4 895.5,684.9 896.0,686.5 896.5,685.6 897.0,686.2 897.5,685.9 898.0,686.1 898.5,684.7 899.0,686.1 899.5,686.3 900.0,685.8 900.5,684.8 901.0,684.8 901.5,685.3 902.0,686.0 902.5,686.5 903.0,685.3 903.5,684.9 904.0,686.7 904.5,684.8 905.0,684.9 905.5,685.3 906.0,686.7 906.5,686.4 907.0,684.9 907.5,685.3 908.0,686.4 908.5,686.5 909.0,685.7 909.5,686.4 910.0,686.6 910.5,685.5 911.0,685.0 911.5,685.0 912.0,685.5 912.5,686.9 913.0,685.3 913.5,685.4 914.0,686.9 914.5,686.1 915.0,686.6 915.5,687.0 916.0,685.9 916.5,686.1 917.0,687.1 917.5,685.6 918.0,687.2 918.5,686.0 919.0,685.7 919.5,687.4 920.0,685.4 920.5,686.1 921.0,686.7 921.5,686.8 922.0,686.7 922.5,685.7 923.0,686.1 923.5,687.0 924.0,685.5 924.5,686.6 925.0,685.9 925.5,685.7 926.0,686.8 926.5,686.3 927.0,685.7 927.5,685.6 928.0,686.3 928.5,686.4 929.0,685.3 929.5,685.9 930.0,684.3 930.5,686.2 931.0,685.3 931.5,686.6 932.0,684.8 932.5,686.3 933.0,684.6 933.5,685.0 934.0,685.2 934.5,685.9 935.0,685.9 935.5,686.4 936.0,685.3 936.5,685.2 937.0,685.4 937.5,686.3 938.0,685.9 938.5,685.8 939.0,684.8 939.5,685.4 940.0,685.9 940.5,686.3 941.0,685.8 941.5,685.9 942.0,684.9 942.5,684.9 943.0,684.8 943.5,685.7 944.0,685.5 944.5,686.3 945.0,686.6 945.5,685.2 946.0,685.1 946.5,685.4 947.0,684.1 947.5,686.0 948.0,684.7 948.5,684.7 949.0,684.7 949.5,686.5 950.0,684.8 950.5,684.8 951.0,685.1 951.5,685.3 952.0,685.6 952.5,685.7 953.0,685.3 953.5,685.9 954.0,684.0 954.5,686.0 955.0,686.2 955.5,685.4 956.0,684.9 956.5,686.6 957.0,685.6 957.5,685.4 958.0,685.5 958.5,685.2 959.0,686.6 959.5,687.0 960.0,686.2 960.5,686.1 961.0,687.3 961.5,684.5 962.0,686.6 962.5,687.0 963.0,685.7 963.5,685.6 964.0,685.5 964.5,686.7 965.0,686.8 965.5,685.0 966.0,684.8 966.5,685.8 967.0,685.7 967.5,687.0 968.0,685.1 968.5,685.8 969.0,685.5 969.5,686.9 970.0,686.7 970.5,687.1 971.0,687.0 971.5,685.1 972.0,687.1 972.5,685.2 973.0,687.0 973.5,686.1 974.0,685.6 974.5,686.7 975.0,686.1 975.5,686.6 976.0,686.7 976.5,685.5 977.0,686.1 977.5,684.9 978.0,684.6 978.5,685.9 979.0,684.5 979.5,686.5 980.0,686.6 980.5,685.0 981.0,686.2 981.5,685.0 982.0,684.4 982.5,685.0 983.0,684.7 983.5,685.5 984.0,685.2 984.5,685.1 985.0,687.3 985.5,686.6 986.0,687.0 986.5,685.4 987.0,685.3 987.5,684.9 988.0,686.4 988.5,686.5 989.0,684.7 989.5,685.3 990.0,685.8 990.5,686.5 991.0,685.3 991.5,684.5 992.0,685.9 992.5,685.0 993.0,685.2 993.5,685.6 994.0,685.0 994.5,685.7 995.0,686.6 995.5,685.6 996.0,685.5 996.5,686.6 997.0,684.7 997.5,686.1 998.0,686.5 998.5,685.6 999.0,686.1 999.5,685.1 1000.0,686.3 1000.5,684.8 1001.0,686.8 1001.5,684.8 1002.0,684.6 1002.5,685.7 1003.0,685.9 1003.5,686.0 1004.0,686.3 1004.5,685.6 1005.0,685.1 1005.5,685.6 1006.0,686.5 1006.5,684.5 1007.0,685.1 1007.5,686.4 1008.0,686.0 1008.5,687.3 1009.0,685.4 1009.5,685.1 1010.0,686.7 1010.5,685.1 1011.0,685.1 1011.5,684.7 1012.0,686.4 1012.5,683.4 1013.0,685.1 1013.5,684.6 1014.0,685.7 1014.5,684.4 1015.0,684.8 1015.5,685.6 1016.0,684.9 1016.5,684.4 1017.0,685.7 1017.5,686.4 1018.0,685.2 1018.5,685.1 1019.0,684.6 1019.5,686.4 1020.0,685.1 1020.5,686.5 1021.0,685.3 1021.5,685.7 1022.0,686.0 1022.5,685.9 1023.0,685.0 1023.5,685.1 1024.0,685.3 1024.5,686.4 1025.0,686.0 1025.5,685.2 1026.0,686.2 1026.5,686.1 1027.0,685.8 1027.5,685.3 1028.0,685.5 1028.5,685.7 1029.0,686.7 1029.5,685.3 1030.0,686.7 1030.5,685.3 1031.0,686.1 1031.5,686.1 1032.0,686.5 1032.5,685.4 1033.0,686.2 1033.5,686.3 1034.0,686.5 1034.5,686.1 1035.0,686.8 1035.5,685.3 1036.0,686.5 1036.5,685.7 1037.0,685.0 1037.5,686.0 1038.0,683.8 1038.5,686.5 1039.0,685.5 1039.5,685.6 1040.0,685.9 1040.5,685.6 1041.0,686.2 1041.5,686.9 1042.0,685.0 1042.5,686.4 1043.0,685.6 1043.5,687.4 1044.0,686.3 1044.5,685.6 1045.0,685.2 1045.5,686.4 1046.0,686.9 1046.5,685.0 1047.0,685.6 1047.5,685.5 1048.0,684.9 1048.5,686.8 1049.0,685.1 1049.5,685.4 1050.0,686.0 1050.5,686.5 1051.0,685.6 1051.5,686.9 1052.0,686.6 1052.5,686.9 1053.0,686.8 1053.5,685.5 1054.0,686.6 1054.5,686.0 1055.0,685.7 1055.5,686.6 1056.0,686.7 1056.5,686.1 1057.0,686.0 1057.5,685.2 1058.0,685.5 1058.5,685.4 1059.0,686.4 1059.5,685.2 1060.0,685.4 1060.5,684.7 1061.0,686.1 1061.5,684.7 1062.0,684.7 1062.5,686.3 1063.0,686.5 1063.5,684.8 1064.0,684.8 1064.5,686.2 1065.0,685.9 1065.5,685.6 1066.0,685.9 1066.5,684.8 1067.0,686.2 1067.5,685.3 1068.0,684.8 1068.5,685.0 1069.0,685.8 1069.5,686.3 1070.0,686.3 1070.5,685.1 1071.0,686.2 1071.5,685.1 1072.0,684.8 1072.5,685.0 1073.0,686.2 1073.5,684.6 1074.0,686.1 1074.5,685.9 1075.0,684.4 1075.5,684.9 1076.0,685.6 1076.5,686.1 1077.0,685.9 1077.5,686.1 1078.0,684.7 1078.5,685.2 1079.0,685.8 1079.5,684.6 1080.0,686.3 1080.5,685.9 1081.0,684.9 1081.5,685.2 1082.0,685.1 1082.5,686.8 1083.0,686.0 1083.5,683.8 1084.0,686.0 1084.5,685.6 1085.0,685.4 1085.5,684.8 1086.0,686.5 1086.5,686.4 1087.0,685.6 1087.5,685.6 1088.0,685.0 1088.5,685.1 1089.0,686.4 1089.5,685.1 1090.0,686.0 1090.5,686.0 1091.0,685.4 1091.5,686.1 1092.0,685.7 1092.5,685.3 1093.0,685.9 1093.5,685.8 1094.0,685.6 1094.5,686.4 1095.0,685.3 1095.5,686.3 1096.0,685.8 1096.5,684.0 1097.0,685.4 1097.5,685.9 1098.0,686.3 1098.5,685.2 1099.0,685.1 1099.5,685.8 1100.0,684.8 1100.5,685.0 1101.0,684.9 1101.5,685.9 1102.0,685.6 1102.5,686.2 1103.0,685.3 1103.5,685.7 1104.0,686.7 1104.5,684.9 1105.0,686.5 1105.5,685.8 1106.0,685.9 1106.5,684.7 1107.0,686.0 1107.5,685.8 1108.0,685.0 1108.5,685.1 1109.0,685.2 1109.5,685.5 1110.0,686.2 1110.5,684.2 1111.0,685.9 1111.5,685.2 1112.0,685.9 1112.5,684.4 1113.0,684.8 1113.5,685.9 1114.0,685.3 1114.5,686.4 1115.0,685.5 1115.5,684.3 1116.0,685.4 1116.5,684.7 1117.0,685.3 1117.5,684.6 1118.0,684.8 1118.5,685.9 1119.0,684.2 1119.5,685.6 1120.0,686.2 1120.5,686.4 1121.0,685.7 1121.5,684.6 1122.0,685.9 1122.5,686.1 1123.0,685.8 1123.5,686.1 1124.0,685.6 1124.5,686.1 1125.0,686.3 1125.5,685.0 1126.0,685.7 1126.5,684.6 1127.0,684.5 1127.5,684.8 1128.0,684.8 1128.5,684.4 1129.0,686.3 1129.5,684.4 1130.0,685.3 1130.5,684.7 1131.0,684.5 1131.5,686.3 1132.0,685.6 1132.5,685.1 1133.0,686.6 1133.5,684.8 1134.0,684.6 1134.5,685.8 1135.0,686.0 1135.5,686.4 1136.0,685.5 1136.5,686.3 1137.0,685.0 1137.5,687.3 1138.0,686.4 1138.5,686.3 1139.0,684.3 1139.5,685.3 1140.0,686.2 1140.5,686.0 1141.0,685.4 1141.5,685.3 1142.0,686.6 1142.5,685.1 1143.0,685.8 1143.5,685.5 1144.0,685.7 1144.5,686.7 1145.0,686.7 1145.5,685.8 1146.0,684.9 1146.5,685.0 1147.0,684.9 1147.5,686.2 1148.0,685.0 1148.5,686.5 1149.0,684.8 1149.5,686.6 1150.0,684.8 1150.5,686.2 1151.0,685.6 1151.5,686.8 1152.0,686.9 1152.5,685.1 1153.0,686.1 1153.5,685.5 1154.0,684.9 1154.5,685.1 1155.0,685.8 1155.5,686.4 1156.0,686.7 1156.5,685.3 1157.0,685.0 1157.5,685.7 1158.0,685.4 1158.5,686.4 1159.0,686.2 1159.5,686.5 1160.0,684.8 1160.5,685.1 1161.0,685.2 1161.5,686.1 1162.0,685.9 1162.5,685.5 1163.0,684.5 1163.5,685.2 1164.0,684.1 1164.5,684.9 1165.0,685.8 1165.5,685.9 1166.0,686.4 1166.5,685.4 1167.0,685.9 1167.5,684.9 1168.0,685.6 1168.5,686.3 1169.0,685.7 1169.5,684.8 1170.0,685.0 1170.5,683.7 1171.0,683.3 1171.5,686.0 1172.0,685.3 1172.5,685.8 1173.0,685.0 1173.5,686.3 1174.0,685.6 1174.5,686.9 1175.0,686.4 1175.5,686.8 1176.0,686.9 1176.5,686.3 1177.0,685.3 1177.5,685.5 1178.0,684.7 1178.5,686.1 1179.0,684.8 1179.5,684.8 1180.0,684.0 1180.5,685.2 1181.0,685.5 1181.5,686.5 1182.0,684.6 1182.5,686.5 1183.0,685.7 1183.5,685.2 1184.0,685.7 1184.5,684.7 1185.0,685.8 1185.5,685.1 1186.0,685.4 1186.5,684.3 1187.0,685.2 1187.5,682.6 1188.0,684.7 1188.5,685.2 1189.0,684.6 1189.5,685.8 1190.0,684.3 1190.5,685.2 1191.0,685.0 1191.5,684.1 1192.0,683.9 1192.5,685.5 1193.0,684.4 1193.5,685.7 1194.0,685.8 1194.5,684.8 1195.0,683.7 1195.5,684.1 1196.0,685.1 1196.5,684.0 1197.0,684.9 1197.5,684.2 1198.0,684.9 1198.5,685.7 1199.0,685.4 1199.5,684.6 1200.0,685.1 1200.5,685.1 1201.0,684.9 1201.5,685.4 1202.0,685.5 1202.5,685.1 1203.0,685.4 1203.5,686.0 1204.0,685.7 1204.5,684.5 1205.0,685.7 1205.5,685.7 1206.0,686.4 1206.5,685.2 1207.0,685.7 1207.5,686.4 1208.0,684.6 1208.5,684.9 1209.0,684.7 1209.5,684.9 1210.0,686.8 1210.5,685.5 1211.0,686.1 1211.5,686.0 1212.0,685.7 1212.5,686.7 1213.0,686.2 1213.5,685.7 1214.0,686.6 1214.5,683.4 1215.0,685.4 1215.5,686.2 1216.0,685.0 1216.5,685.6 1217.0,685.6 1217.5,685.6 1218.0,685.8 1218.5,686.4 1219.0,686.0 1219.5,685.0 1220.0,686.6 1220.5,684.7 1221.0,685.1 1221.5,686.4 1222.0,684.9 1222.5,683.9 1223.0,685.5 1223.5,686.2 1224.0,686.1 1224.5,684.7 1225.0,685.3 1225.5,685.6 1226.0,684.9 1226.5,685.0 1227.0,685.5 1227.5,685.1 1228.0,684.7 1228.5,685.1 1229.0,685.6 1229.5,685.5 1230.0,685.9 1230.5,685.4 1231.0,685.1 1231.5,685.2 1232.0,686.1 1232.5,684.6 1233.0,685.3 1233.5,685.3 1234.0,684.6 1234.5,687.8 1235.0,687.2 1235.5,687.2 1236.0,685.1 1236.5,685.4 1237.0,684.9 1237.5,686.5 1238.0,685.5 1238.5,685.7 1239.0,685.3 1239.5,686.1 1240.0,685.1 1240.5,686.7 1241.0,687.5 1241.5,687.3 1242.0,686.0 1242.5,685.7 1243.0,687.0 1243.5,686.7 1244.0,686.4 1244.5,686.5 1245.0,686.9 1245.5,685.7 1246.0,685.7 1246.5,686.8 1247.0,684.9 1247.5,685.0 1248.0,686.7 1248.5,685.3 1249.0,685.9 1249.5,684.1 1250.0,686.6 1250.5,685.7 1251.0,685.1 1251.5,685.6 1252.0,684.4 1252.5,686.7 1253.0,686.1 1253.5,685.9 1254.0,685.9 1254.5,684.8 1255.0,685.8 1255.5,683.9 1256.0,686.5 1256.5,686.3 1257.0,685.1 1257.5,686.2 1258.0,685.8 1258.5,686.7 1259.0,686.6 1259.5,685.2 1260.0,685.0 1260.5,685.9 1261.0,684.8 1261.5,686.2 1262.0,685.8 1262.5,686.2 1263.0,686.0 1263.5,685.5 1264.0,686.7 1264.5,685.7 1265.0,684.9 1265.5,686.3 1266.0,686.6 1266.5,686.1 1267.0,685.2 1267.5,685.1 1268.0,685.4 1268.5,686.6 1269.0,685.6 1269.5,685.1 1270.0,684.9 1270.5,686.6 1271.0,684.8 1271.5,684.9 1272.0,685.9 1272.5,686.3 1273.0,686.9 1273.5,686.5 1274.0,685.0 1274.5,684.1 1275.0,685.8 1275.5,685.6 1276.0,686.3 1276.5,686.6 1277.0,684.9 1277.5,684.8 1278.0,685.3 1278.5,686.6 1279.0,686.1 1279.5,686.2 1280.0,685.9 1280.5,686.4 1281.0,685.6 1281.5,686.2 1282.0,685.8 1282.5,685.3 1283.0,685.9 1283.5,684.9 1284.0,686.6 1284.5,684.9 1285.0,683.8 1285.5,686.6 1286.0,685.0 1286.5,685.8 1287.0,686.5 1287.5,685.0 1288.0,685.7 1288.5,686.2 1289.0,685.4 1289.5,686.4 1290.0,686.7 1290.5,686.5 1291.0,686.7 1291.5,686.2 1292.0,687.0 1292.5,685.6 1293.0,686.4 1293.5,686.6 1294.0,686.8 1294.5,685.0 1295.0,684.9 1295.5,685.3 1296.0,685.5 1296.5,685.4 1297.0,685.0 1297.5,685.6 1298.0,685.1 1298.5,686.1 1299.0,686.4 1299.5,686.7 1300.0,684.7 1300.5,685.4 1301.0,685.1 1301.5,685.3 1302.0,685.4 1302.5,685.6 1303.0,685.5 1303.5,685.9 1304.0,685.5 1304.5,685.4 1305.0,686.8 1305.5,685.8 1306.0,685.4 1306.5,686.9 1307.0,686.7 1307.5,685.2 1308.0,686.4 1308.5,685.3 1309.0,685.9 1309.5,685.7 1310.0,685.2 1310.5,684.7 1311.0,684.4 1311.5,685.7 1312.0,687.8 1312.5,686.7 1313.0,687.4 1313.5,686.6 1314.0,685.4 1314.5,686.1 1315.0,686.4 1315.5,685.6 1316.0,685.0 1316.5,685.1 1317.0,685.0 1317.5,686.1 1318.0,685.4 1318.5,684.7 1319.0,685.8 1319.5,684.5 1320.0,685.5 1320.5,686.5 1321.0,685.2 1321.5,685.3 1322.0,686.5 1322.5,685.2 1323.0,685.4 1323.5,685.2 1324.0,685.6 1324.5,685.2 1325.0,685.3 1325.5,685.1 1326.0,685.6 1326.5,686.6 1327.0,686.6 1327.5,686.3 1328.0,685.8 1328.5,686.2 1329.0,684.4 1329.5,685.2 1330.0,686.2 1330.5,685.8 1331.0,684.9 1331.5,685.3 1332.0,685.1 1332.5,686.3 1333.0,686.4 1333.5,685.6 1334.0,685.6 1334.5,685.2 1335.0,686.2 1335.5,685.7 1336.0,686.1 1336.5,685.8 1337.0,684.6 1337.5,684.9 1338.0,684.9 1338.5,686.2 1339.0,684.5 1339.5,686.3 1340.0,684.6 1340.5,684.5 1341.0,685.4 1341.5,685.2 1342.0,685.7 1342.5,684.9 1343.0,686.1 1343.5,685.2 1344.0,685.7 1344.5,684.9 1345.0,685.4 1345.5,685.9 1346.0,685.7 1346.5,685.4 1347.0,686.3 1347.5,685.1 1348.0,686.3 1348.5,686.1 1349.0,685.8 1349.5,685.6 1350.0,684.8 1350.5,686.1 1351.0,686.3 1351.5,685.9 1352.0,684.4 1352.5,685.2 1353.0,684.6 1353.5,685.4 1354.0,685.9 1354.5,685.4 1355.0,684.8 1355.5,685.1 1356.0,686.0 1356.5,686.0 1357.0,684.9 1357.5,685.0 1358.0,686.1 1358.5,684.9 1359.0,685.5 1359.5,685.3 1360.0,684.5 1360.5,686.0 1361.0,685.0 1361.5,686.4 1362.0,685.1 1362.5,686.4 1363.0,686.3 1363.5,685.1 1364.0,685.1 1364.5,686.2 1365.0,685.6 1365.5,685.9 1366.0,684.7 1366.5,686.0 1367.0,684.4 1367.5,684.8 1368.0,685.3 1368.5,683.4 1369.0,685.7 1369.5,685.9 1370.0,686.2 1370.5,685.2 1371.0,686.3 1371.5,685.0 1372.0,685.9 1372.5,685.7 1373.0,686.5 1373.5,685.3 1374.0,686.5 1374.5,685.9 1375.0,686.3 1375.5,685.8 1376.0,685.4 1376.5,685.1 1377.0,686.2 1377.5,685.3 1378.0,685.7 1378.5,688.0 1379.0,686.1 1379.5,685.6 1380.0,687.0 1380.5,686.7 1381.0,684.8 1381.5,686.4 1382.0,686.1 1382.5,684.7 1383.0,685.4 1383.5,685.7 1384.0,684.3 1384.5,686.3 1385.0,684.4 1385.5,684.8 1386.0,684.9 1386.5,685.0 1387.0,685.7 1387.5,684.6 1388.0,686.0 1388.5,684.9 1389.0,685.8 1389.5,684.4 1390.0,684.9 1390.5,685.9 1391.0,685.1 1391.5,685.1 1392.0,686.2 1392.5,685.6 1393.0,684.6 1393.5,685.6 1394.0,684.6 1394.5,684.5 1395.0,684.7 1395.0,695.2 1394.5,699.6 1394.0,695.3 1393.5,696.2 1393.0,695.7 1392.5,695.8 1392.0,696.0 1391.5,696.6 1391.0,695.6 1390.5,695.8 1390.0,696.7 1389.5,696.1 1389.0,695.9 1388.5,696.0 1388.0,697.2 1387.5,696.5 1387.0,698.6 1386.5,698.2 1386.0,695.7 1385.5,695.8 1385.0,696.1 1384.5,695.9 1384.0,695.9 1383.5,696.0 1383.0,696.1 1382.5,696.3 1382.0,696.7 1381.5,696.9 1381.0,697.6 1380.5,697.9 1380.0,697.8 1379.5,698.4 1379.0,699.7 1378.5,701.4 1378.0,702.5 1377.5,701.7 1377.0,695.4 1376.5,695.8 1376.0,695.4 1375.5,695.4 1375.0,696.0 1374.5,697.3 1374.0,696.7 1373.5,695.6 1373.0,695.5 1372.5,695.2 1372.0,695.3 1371.5,696.6 1371.0,695.4 1370.5,695.4 1370.0,696.1 1369.5,695.6 1369.0,695.8 1368.5,695.8 1368.0,698.3 1367.5,696.8 1367.0,697.7 1366.5,697.5 1366.0,698.0 1365.5,696.1 1365.0,697.8 1364.5,696.7 1364.0,695.7 1363.5,696.2 1363.0,695.7 1362.5,696.0 1362.0,696.5 1361.5,695.8 1361.0,695.9 1360.5,696.0 1360.0,696.1 1359.5,697.0 1359.0,696.4 1358.5,696.3 1358.0,697.4 1357.5,697.4 1357.0,697.2 1356.5,699.2 1356.0,698.4 1355.5,699.2 1355.0,700.7 1354.5,694.8 1354.0,696.3 1353.5,695.2 1353.0,695.6 1352.5,696.1 1352.0,695.2 1351.5,696.2 1351.0,695.5 1350.5,696.6 1350.0,695.5 1349.5,695.3 1349.0,696.3 1348.5,695.5 1348.0,695.1 1347.5,696.0 1347.0,696.6 1346.5,696.6 1346.0,695.3 1345.5,697.9 1345.0,697.4 1344.5,697.2 1344.0,697.2 1343.5,696.5 1343.0,697.3 1342.5,694.9 1342.0,696.0 1341.5,695.9 1341.0,695.5 1340.5,695.0 1340.0,698.5 1339.5,695.1 1339.0,694.9 1338.5,697.5 1338.0,695.4 1337.5,695.9 1337.0,695.8 1336.5,696.1 1336.0,696.4 1335.5,696.7 1335.0,696.4 1334.5,697.9 1334.0,698.1 1333.5,697.6 1333.0,698.9 1332.5,698.2 1332.0,697.3 1331.5,698.1 1331.0,696.5 1330.5,696.6 1330.0,696.2 1329.5,695.7 1329.0,695.8 1328.5,696.7 1328.0,696.0 1327.5,695.8 1327.0,698.7 1326.5,695.6 1326.0,696.0 1325.5,695.7 1325.0,695.8 1324.5,696.4 1324.0,695.6 1323.5,696.5 1323.0,696.0 1322.5,696.9 1322.0,696.5 1321.5,696.2 1321.0,696.2 1320.5,695.7 1320.0,695.7 1319.5,695.8 1319.0,695.7 1318.5,695.9 1318.0,695.9 1317.5,696.2 1317.0,696.0 1316.5,696.6 1316.0,698.1 1315.5,696.6 1315.0,696.8 1314.5,698.1 1314.0,698.0 1313.5,698.2 1313.0,699.0 1312.5,699.2 1312.0,702.3 1311.5,702.1 1311.0,701.7 1310.5,695.2 1310.0,696.5 1309.5,695.6 1309.0,697.2 1308.5,695.6 1308.0,696.6 1307.5,696.7 1307.0,696.8 1306.5,696.7 1306.0,695.9 1305.5,697.1 1305.0,696.0 1304.5,696.9 1304.0,695.9 1303.5,697.0 1303.0,696.0 1302.5,696.8 1302.0,696.2 1301.5,696.5 1301.0,697.1 1300.5,695.6 1300.0,696.9 1299.5,696.7 1299.0,696.4 1298.5,696.5 1298.0,698.0 1297.5,696.2 1297.0,695.8 1296.5,696.7 1296.0,697.6 1295.5,697.0 1295.0,697.5 1294.5,697.1 1294.0,697.1 1293.5,697.0 1293.0,696.9 1292.5,697.6 1292.0,697.6 1291.5,698.3 1291.0,699.2 1290.5,700.7 1290.0,696.9 1289.5,696.7 1289.0,696.6 1288.5,696.7 1288.0,696.5 1287.5,696.7 1287.0,696.6 1286.5,696.4 1286.0,696.7 1285.5,696.7 1285.0,696.7 1284.5,695.5 1284.0,696.0 1283.5,696.9 1283.0,698.0 1282.5,697.8 1282.0,696.7 1281.5,696.3 1281.0,695.5 1280.5,695.7 1280.0,696.5 1279.5,696.6 1279.0,696.8 1278.5,696.4 1278.0,696.3 1277.5,696.3 1277.0,695.4 1276.5,696.5 1276.0,695.7 1275.5,696.7 1275.0,696.8 1274.5,696.4 1274.0,696.4 1273.5,696.2 1273.0,695.5 1272.5,695.7 1272.0,696.5 1271.5,696.0 1271.0,696.3 1270.5,696.1 1270.0,695.2 1269.5,696.2 1269.0,696.3 1268.5,696.9 1268.0,696.4 1267.5,696.1 1267.0,697.9 1266.5,697.5 1266.0,696.8 1265.5,696.0 1265.0,695.3 1264.5,696.7 1264.0,695.4 1263.5,696.8 1263.0,696.7 1262.5,696.5 1262.0,696.2 1261.5,696.5 1261.0,697.1 1260.5,697.0 1260.0,696.4 1259.5,695.5 1259.0,696.8 1258.5,696.3 1258.0,696.0 1257.5,696.1 1257.0,695.8 1256.5,695.5 1256.0,696.6 1255.5,696.6 1255.0,696.5 1254.5,697.0 1254.0,698.7 1253.5,696.5 1253.0,696.2 1252.5,697.7 1252.0,697.5 1251.5,696.5 1251.0,697.2 1250.5,696.4 1250.0,696.9 1249.5,697.0 1249.0,696.4 1248.5,697.0 1248.0,696.5 1247.5,695.7 1247.0,695.7 1246.5,695.8 1246.0,695.8 1245.5,696.2 1245.0,697.2 1244.5,696.6 1244.0,696.5 1243.5,696.4 1243.0,697.1 1242.5,699.9 1242.0,697.2 1241.5,697.6 1241.0,697.8 1240.5,698.8 1240.0,699.7 1239.5,699.5 1239.0,696.2 1238.5,696.5 1238.0,696.8 1237.5,696.8 1237.0,697.5 1236.5,697.1 1236.0,697.5 1235.5,699.6 1235.0,699.2 1234.5,700.8 1234.0,703.6 1233.5,696.3 1233.0,698.9 1232.5,699.6 1232.0,696.3 1231.5,697.1 1231.0,697.7 1230.5,696.8 1230.0,697.1 1229.5,697.2 1229.0,697.6 1228.5,696.6 1228.0,695.6 1227.5,695.6 1227.0,695.6 1226.5,696.6 1226.0,698.0 1225.5,698.4 1225.0,697.7 1224.5,698.2 1224.0,697.9 1223.5,697.8 1223.0,696.4 1222.5,696.7 1222.0,696.2 1221.5,695.9 1221.0,695.7 1220.5,696.7 1220.0,696.3 1219.5,695.8 1219.0,696.7 1218.5,696.3 1218.0,695.9 1217.5,696.4 1217.0,696.3 1216.5,696.5 1216.0,696.7 1215.5,699.0 1215.0,697.7 1214.5,698.1 1214.0,695.7 1213.5,696.8 1213.0,695.6 1212.5,695.8 1212.0,696.9 1211.5,696.5 1211.0,697.9 1210.5,696.5 1210.0,696.0 1209.5,695.4 1209.0,696.2 1208.5,696.1 1208.0,695.1 1207.5,695.3 1207.0,695.2 1206.5,696.3 1206.0,695.0 1205.5,695.8 1205.0,695.3 1204.5,695.8 1204.0,695.5 1203.5,695.9 1203.0,698.3 1202.5,696.1 1202.0,696.0 1201.5,696.3 1201.0,695.2 1200.5,696.8 1200.0,696.6 1199.5,697.3 1199.0,696.2 1198.5,696.2 1198.0,694.8 1197.5,694.7 1197.0,695.9 1196.5,695.1 1196.0,696.1 1195.5,694.7 1195.0,695.3 1194.5,695.1 1194.0,695.0 1193.5,695.4 1193.0,697.6 1192.5,697.2 1192.0,697.6 1191.5,695.6 1191.0,695.0 1190.5,695.6 1190.0,695.1 1189.5,694.6 1189.0,694.7 1188.5,695.3 1188.0,695.2 1187.5,695.6 1187.0,696.1 1186.5,695.6 1186.0,696.3 1185.5,695.6 1185.0,695.6 1184.5,697.0 1184.0,696.1 1183.5,695.7 1183.0,698.8 1182.5,696.0 1182.0,696.8 1181.5,695.9 1181.0,695.8 1180.5,695.8 1180.0,696.6 1179.5,696.3 1179.0,696.9 1178.5,696.1 1178.0,696.2 1177.5,696.5 1177.0,696.7 1176.5,697.2 1176.0,699.8 1175.5,697.6 1175.0,698.1 1174.5,699.4 1174.0,700.5 1173.5,699.7 1173.0,699.1 1172.5,695.6 1172.0,696.8 1171.5,695.1 1171.0,698.3 1170.5,696.2 1170.0,696.5 1169.5,695.9 1169.0,695.9 1168.5,696.5 1168.0,698.4 1167.5,696.1 1167.0,696.5 1166.5,695.2 1166.0,696.5 1165.5,695.2 1165.0,696.0 1164.5,696.1 1164.0,696.4 1163.5,696.1 1163.0,696.0 1162.5,695.9 1162.0,696.9 1161.5,696.9 1161.0,696.7 1160.5,696.2 1160.0,696.7 1159.5,696.1 1159.0,696.2 1158.5,695.9 1158.0,696.9 1157.5,696.6 1157.0,695.7 1156.5,695.8 1156.0,695.8 1155.5,698.4 1155.0,699.1 1154.5,698.7 1154.0,701.0 1153.5,696.2 1153.0,696.4 1152.5,697.1 1152.0,697.4 1151.5,697.3 1151.0,697.9 1150.5,699.2 1150.0,698.4 1149.5,696.7 1149.0,696.5 1148.5,695.6 1148.0,695.8 1147.5,696.8 1147.0,696.3 1146.5,697.9 1146.0,697.9 1145.5,697.4 1145.0,696.9 1144.5,696.1 1144.0,696.9 1143.5,696.4 1143.0,696.8 1142.5,697.2 1142.0,697.1 1141.5,697.6 1141.0,697.9 1140.5,698.3 1140.0,700.6 1139.5,698.4 1139.0,698.2 1138.5,698.3 1138.0,700.0 1137.5,700.0 1137.0,700.1 1136.5,700.8 1136.0,695.1 1135.5,695.5 1135.0,695.0 1134.5,696.3 1134.0,695.3 1133.5,695.8 1133.0,695.8 1132.5,696.8 1132.0,695.5 1131.5,696.2 1131.0,696.4 1130.5,697.8 1130.0,695.7 1129.5,696.5 1129.0,697.5 1128.5,695.9 1128.0,696.6 1127.5,696.2 1127.0,695.5 1126.5,696.1 1126.0,695.4 1125.5,696.1 1125.0,695.6 1124.5,695.1 1124.0,695.4 1123.5,699.1 1123.0,699.3 1122.5,697.9 1122.0,697.9 1121.5,697.6 1121.0,695.2 1120.5,696.2 1120.0,695.2 1119.5,695.0 1119.0,695.2 1118.5,696.1 1118.0,695.2 1117.5,695.6 1117.0,695.6 1116.5,695.1 1116.0,696.0 1115.5,695.3 1115.0,695.7 1114.5,695.3 1114.0,696.6 1113.5,695.2 1113.0,695.5 1112.5,695.2 1112.0,695.5 1111.5,695.0 1111.0,695.0 1110.5,695.9 1110.0,694.9 1109.5,695.2 1109.0,696.2 1108.5,696.0 1108.0,696.2 1107.5,694.9 1107.0,696.0 1106.5,695.9 1106.0,696.5 1105.5,695.8 1105.0,695.9 1104.5,696.9 1104.0,696.6 1103.5,697.1 1103.0,697.6 1102.5,697.0 1102.0,697.5 1101.5,696.5 1101.0,695.9 1100.5,695.6 1100.0,696.4 1099.5,695.6 1099.0,699.4 1098.5,698.1 1098.0,698.4 1097.5,698.5 1097.0,698.6 1096.5,697.9 1096.0,696.4 1095.5,695.6 1095.0,695.6 1094.5,695.7 1094.0,696.2 1093.5,697.2 1093.0,697.3 1092.5,697.5 1092.0,697.0 1091.5,697.2 1091.0,699.1 1090.5,696.9 1090.0,695.4 1089.5,695.5 1089.0,696.2 1088.5,695.9 1088.0,695.5 1087.5,697.0 1087.0,696.0 1086.5,696.0 1086.0,696.7 1085.5,695.5 1085.0,695.5 1084.5,696.5 1084.0,696.1 1083.5,696.8 1083.0,697.0 1082.5,698.3 1082.0,696.8 1081.5,697.8 1081.0,696.5 1080.5,696.9 1080.0,695.8 1079.5,695.4 1079.0,696.9 1078.5,695.5 1078.0,695.6 1077.5,696.2 1077.0,695.5 1076.5,695.5 1076.0,695.0 1075.5,696.0 1075.0,699.4 1074.5,695.9 1074.0,696.3 1073.5,696.0 1073.0,696.7 1072.5,696.0 1072.0,695.7 1071.5,695.9 1071.0,694.9 1070.5,695.4 1070.0,696.2 1069.5,696.1 1069.0,695.3 1068.5,697.5 1068.0,699.5 1067.5,696.3 1067.0,695.5 1066.5,695.8 1066.0,695.0 1065.5,696.3 1065.0,695.2 1064.5,696.0 1064.0,696.3 1063.5,695.9 1063.0,696.4 1062.5,695.3 1062.0,697.1 1061.5,695.4 1061.0,696.5 1060.5,695.3 1060.0,698.2 1059.5,696.5 1059.0,696.8 1058.5,695.8 1058.0,696.4 1057.5,695.4 1057.0,699.0 1056.5,695.6 1056.0,695.6 1055.5,696.7 1055.0,695.6 1054.5,695.9 1054.0,696.8 1053.5,696.9 1053.0,697.0 1052.5,698.3 1052.0,698.0 1051.5,698.1 1051.0,699.2 1050.5,698.3 1050.0,698.1 1049.5,695.9 1049.0,697.8 1048.5,695.9 1048.0,696.0 1047.5,696.8 1047.0,696.9 1046.5,696.8 1046.0,696.5 1045.5,697.0 1045.0,697.3 1044.5,697.6 1044.0,698.5 1043.5,698.1 1043.0,698.9 1042.5,700.0 1042.0,698.9 1041.5,696.3 1041.0,695.5 1040.5,695.9 1040.0,696.2 1039.5,697.0 1039.0,696.8 1038.5,696.6 1038.0,697.0 1037.5,695.7 1037.0,696.6 1036.5,696.0 1036.0,695.6 1035.5,695.8 1035.0,696.2 1034.5,697.0 1034.0,695.6 1033.5,695.6 1033.0,696.5 1032.5,696.9 1032.0,699.2 1031.5,697.4 1031.0,697.9 1030.5,697.5 1030.0,696.3 1029.5,695.9 1029.0,695.9 1028.5,696.8 1028.0,696.4 1027.5,696.3 1027.0,698.0 1026.5,696.7 1026.0,696.8 1025.5,697.3 1025.0,697.4 1024.5,695.7 1024.0,696.2 1023.5,694.9 1023.0,695.5 1022.5,694.9 1022.0,697.5 1021.5,695.6 1021.0,695.6 1020.5,697.6 1020.0,698.1 1019.5,697.7 1019.0,697.1 1018.5,696.1 1018.0,698.3 1017.5,696.2 1017.0,696.4 1016.5,696.3 1016.0,695.7 1015.5,695.7 1015.0,695.8 1014.5,696.3 1014.0,697.2 1013.5,698.0 1013.0,698.7 1012.5,698.4 1012.0,699.8 1011.5,699.2 1011.0,696.7 1010.5,697.4 1010.0,698.2 1009.5,699.3 1009.0,700.8 1008.5,702.2 1008.0,699.7 1007.5,700.6 1007.0,695.5 1006.5,696.0 1006.0,695.3 1005.5,696.8 1005.0,695.6 1004.5,696.7 1004.0,695.1 1003.5,695.3 1003.0,699.4 1002.5,696.8 1002.0,695.5 1001.5,695.4 1001.0,696.2 1000.5,696.3 1000.0,695.7 999.5,696.4 999.0,696.6 998.5,696.0 998.0,695.6 997.5,695.6 997.0,695.8 996.5,695.8 996.0,695.6 995.5,696.2 995.0,695.6 994.5,701.1 994.0,697.5 993.5,699.3 993.0,697.1 992.5,698.7 992.0,696.2 991.5,695.7 991.0,696.5 990.5,695.9 990.0,696.7 989.5,696.2 989.0,696.2 988.5,696.5 988.0,696.3 987.5,696.6 987.0,697.5 986.5,697.2 986.0,698.6 985.5,699.2 985.0,698.7 984.5,699.7 984.0,699.6 983.5,696.6 983.0,696.1 982.5,696.6 982.0,696.9 981.5,697.4 981.0,698.0 980.5,697.5 980.0,700.0 979.5,698.5 979.0,699.3 978.5,697.7 978.0,696.1 977.5,695.2 977.0,696.7 976.5,696.3 976.0,696.1 975.5,696.1 975.0,696.7 974.5,696.6 974.0,695.9 973.5,697.0 973.0,696.5 972.5,696.7 972.0,696.8 971.5,697.1 971.0,696.9 970.5,697.3 970.0,696.4 969.5,697.2 969.0,696.7 968.5,697.7 968.0,697.4 967.5,697.7 967.0,697.7 966.5,700.8 966.0,696.0 965.5,697.1 965.0,695.8 964.5,696.7 964.0,696.6 963.5,697.0 963.0,697.2 962.5,696.5 962.0,697.3 961.5,695.9 961.0,696.5 960.5,696.7 960.0,699.6 959.5,699.0 959.0,698.6 958.5,698.0 958.0,695.9 957.5,695.8 957.0,696.8 956.5,696.8 956.0,696.6 955.5,696.0 955.0,696.7 954.5,696.4 954.0,695.5 953.5,696.2 953.0,697.0 952.5,696.7 952.0,696.0 951.5,699.5 951.0,698.7 950.5,697.2 950.0,697.8 949.5,696.1 949.0,696.8 948.5,697.9 948.0,695.6 947.5,695.6 947.0,696.1 946.5,695.9 946.0,695.6 945.5,696.8 945.0,696.4 944.5,696.8 944.0,696.6 943.5,695.8 943.0,696.6 942.5,696.6 942.0,696.7 941.5,696.1 941.0,696.1 940.5,696.2 940.0,696.8 939.5,696.5 939.0,698.8 938.5,698.8 938.0,697.5 937.5,698.4 937.0,696.1 936.5,696.7 936.0,695.5 935.5,697.0 935.0,695.8 934.5,695.7 934.0,698.0 933.5,698.2 933.0,698.4 932.5,697.6 932.0,696.8 931.5,696.4 931.0,695.6 930.5,696.8 930.0,696.1 929.5,696.9 929.0,695.6 928.5,695.7 928.0,695.6 927.5,695.6 927.0,696.6 926.5,696.4 926.0,696.3 925.5,696.3 925.0,695.7 924.5,696.0 924.0,696.9 923.5,696.0 923.0,696.9 922.5,695.9 922.0,696.2 921.5,698.7 921.0,697.1 920.5,696.6 920.0,697.3 919.5,697.3 919.0,698.9 918.5,700.0 918.0,700.4 917.5,699.1 917.0,701.1 916.5,696.1 916.0,696.7 915.5,698.0 915.0,698.8 914.5,698.6 914.0,697.5 913.5,696.4 913.0,696.8 912.5,697.3 912.0,697.1 911.5,696.8 911.0,697.9 910.5,697.6 910.0,698.5 909.5,699.2 909.0,696.7 908.5,696.0 908.0,696.4 907.5,696.3 907.0,696.0 906.5,696.3 906.0,696.4 905.5,696.4 905.0,696.3 904.5,696.7 904.0,696.7 903.5,696.1 903.0,697.1 902.5,697.9 902.0,696.3 901.5,697.9 901.0,697.2 900.5,696.3 900.0,695.9 899.5,695.8 899.0,696.4 898.5,695.2 898.0,696.3 897.5,696.4 897.0,697.2 896.5,697.9 896.0,697.6 895.5,698.4 895.0,695.6 894.5,696.6 894.0,695.6 893.5,695.9 893.0,696.5 892.5,695.6 892.0,695.6 891.5,695.8 891.0,696.0 890.5,696.4 890.0,695.7 889.5,697.9 889.0,697.9 888.5,696.4 888.0,695.9 887.5,696.0 887.0,698.1 886.5,696.1 886.0,696.3 885.5,696.2 885.0,696.3 884.5,696.5 884.0,696.7 883.5,697.5 883.0,697.5 882.5,698.1 882.0,699.4 881.5,695.6 881.0,695.6 880.5,696.3 880.0,696.3 879.5,698.1 879.0,697.9 878.5,699.8 878.0,698.2 877.5,696.6 877.0,696.3 876.5,696.3 876.0,696.3 875.5,695.8 875.0,696.3 874.5,695.9 874.0,696.1 873.5,696.5 873.0,696.6 872.5,696.4 872.0,697.5 871.5,697.3 871.0,697.6 870.5,699.3 870.0,699.1 869.5,700.7 869.0,701.3 868.5,703.1 868.0,695.6 867.5,696.7 867.0,696.5 866.5,698.0 866.0,695.7 865.5,696.8 865.0,695.7 864.5,696.2 864.0,696.0 863.5,695.9 863.0,696.1 862.5,696.6 862.0,696.1 861.5,696.1 861.0,696.2 860.5,696.3 860.0,698.0 859.5,697.3 859.0,697.8 858.5,699.3 858.0,698.3 857.5,696.7 857.0,696.1 856.5,695.9 856.0,696.3 855.5,695.5 855.0,696.3 854.5,696.7 854.0,695.1 853.5,696.4 853.0,695.6 852.5,695.9 852.0,697.4 851.5,695.7 851.0,696.3 850.5,698.2 850.0,695.6 849.5,695.6 849.0,696.1 848.5,696.5 848.0,695.6 847.5,695.6 847.0,695.8 846.5,695.7 846.0,695.6 845.5,695.9 845.0,695.7 844.5,696.4 844.0,697.1 843.5,697.5 843.0,698.1 842.5,697.5 842.0,698.1 841.5,696.6 841.0,696.5 840.5,696.5 840.0,696.7 839.5,698.2 839.0,697.9 838.5,697.4 838.0,697.8 837.5,698.5 837.0,695.6 836.5,696.2 836.0,696.4 835.5,696.1 835.0,699.4 834.5,696.7 834.0,695.6 833.5,695.6 833.0,696.2 832.5,696.0 832.0,697.9 831.5,696.6 831.0,696.4 830.5,696.6 830.0,695.9 829.5,696.0 829.0,698.6 828.5,697.6 828.0,696.1 827.5,698.0 827.0,696.6 826.5,696.6 826.0,697.4 825.5,697.3 825.0,697.7 824.5,698.2 824.0,698.4 823.5,697.9 823.0,697.3 822.5,697.0 822.0,695.6 821.5,695.6 821.0,696.3 820.5,695.7 820.0,697.8 819.5,698.8 819.0,695.7 818.5,696.4 818.0,696.4 817.5,695.9 817.0,696.3 816.5,695.9 816.0,696.2 815.5,696.2 815.0,696.4 814.5,698.3 814.0,697.0 813.5,697.1 813.0,698.5 812.5,699.2 812.0,700.2 811.5,699.1 811.0,699.4 810.5,695.9 810.0,696.5 809.5,697.2 809.0,695.6 808.5,695.7 808.0,695.6 807.5,695.6 807.0,695.8 806.5,695.6 806.0,695.7 805.5,695.7 805.0,695.7 804.5,697.3 804.0,698.1 803.5,697.4 803.0,697.3 802.5,696.2 802.0,696.0 801.5,696.2 801.0,696.6 800.5,696.6 800.0,696.9 799.5,697.2 799.0,697.5 798.5,697.4 798.0,698.2 797.5,698.5 797.0,699.2 796.5,700.9 796.0,695.7 795.5,696.3 795.0,695.8 794.5,695.0 794.0,695.4 793.5,696.4 793.0,696.1 792.5,694.8 792.0,696.7 791.5,695.3 791.0,695.9 790.5,696.6 790.0,697.6 789.5,695.0 789.0,695.4 788.5,695.7 788.0,696.2 787.5,695.6 787.0,695.6 786.5,696.1 786.0,696.2 785.5,695.6 785.0,695.6 784.5,698.1 784.0,697.4 783.5,695.9 783.0,695.7 782.5,695.7 782.0,696.6 781.5,696.6 781.0,695.8 780.5,695.9 780.0,696.3 779.5,695.9 779.0,697.4 778.5,696.8 778.0,697.6 777.5,698.3 777.0,697.5 776.5,699.0 776.0,698.1 775.5,697.7 775.0,699.5 774.5,698.8 774.0,701.9 773.5,702.8 773.0,696.0 772.5,695.7 772.0,696.1 771.5,697.0 771.0,698.8 770.5,696.9 770.0,696.9 769.5,696.6 769.0,696.6 768.5,696.3 768.0,695.6 767.5,695.4 767.0,695.1 766.5,696.3 766.0,696.5 765.5,696.7 765.0,695.6 764.5,698.4 764.0,697.4 763.5,697.0 763.0,698.3 762.5,696.3 762.0,696.0 761.5,697.4 761.0,696.8 760.5,697.3 760.0,696.3 759.5,697.6 759.0,697.2 758.5,696.6 758.0,695.8 757.5,695.7 757.0,696.2 756.5,696.8 756.0,696.5 755.5,696.0 755.0,696.2 754.5,696.4 754.0,696.9 753.5,696.4 753.0,697.8 752.5,698.2 752.0,697.2 751.5,695.6 751.0,696.9 750.5,699.8 750.0,699.0 749.5,695.2 749.0,695.1 748.5,695.2 748.0,696.4 747.5,696.3 747.0,695.2 746.5,696.8 746.0,696.7 745.5,696.6 745.0,696.8 744.5,696.7 744.0,696.5 743.5,695.0 743.0,696.8 742.5,696.6 742.0,696.1 741.5,696.3 741.0,697.0 740.5,695.9 740.0,696.6 739.5,696.2 739.0,695.5 738.5,695.7 738.0,696.5 737.5,696.0 737.0,697.5 736.5,695.6 736.0,695.6 735.5,697.1 735.0,695.6 734.5,695.6 734.0,696.2 733.5,696.6 733.0,695.6 732.5,696.2 732.0,695.7 731.5,696.5 731.0,695.7 730.5,695.8 730.0,696.5 729.5,695.8 729.0,696.6 728.5,699.1 728.0,697.7 727.5,699.3 727.0,698.2 726.5,697.4 726.0,699.6 725.5,697.2 725.0,698.4 724.5,699.3 724.0,698.3 723.5,698.5 723.0,695.9 722.5,696.1 722.0,696.1 721.5,696.1 721.0,696.3 720.5,696.2 720.0,696.5 719.5,696.8 719.0,696.9 718.5,698.5 718.0,698.8 717.5,699.5 717.0,699.3 716.5,699.1 716.0,699.3 715.5,696.4 715.0,696.1 714.5,696.2 714.0,695.0 713.5,696.4 713.0,696.4 712.5,695.5 712.0,695.9 711.5,695.6 711.0,697.1 710.5,695.0 710.0,696.4 709.5,694.7 709.0,695.9 708.5,696.0 708.0,696.0 707.5,694.8 707.0,696.3 706.5,697.8 706.0,694.8 705.5,695.2 705.0,695.5 704.5,695.4 704.0,695.9 703.5,696.2 703.0,696.1 702.5,696.7 702.0,695.6 701.5,695.6 701.0,695.6 700.5,695.6 700.0,695.6 699.5,695.6 699.0,696.3 698.5,697.1 698.0,696.8 697.5,696.3 697.0,695.7 696.5,695.7 696.0,695.7 695.5,696.1 695.0,696.2 694.5,695.8 694.0,696.3 693.5,696.0 693.0,696.3 692.5,699.6 692.0,698.4 691.5,699.0 691.0,697.6 690.5,698.7 690.0,698.9 689.5,698.3 689.0,699.7 688.5,695.6 688.0,695.6 687.5,696.7 687.0,695.7 686.5,695.8 686.0,696.1 685.5,695.8 685.0,696.0 684.5,695.9 684.0,696.1 683.5,698.1 683.0,696.3 682.5,697.7 682.0,696.6 681.5,697.2 681.0,697.9 680.5,697.7 680.0,698.3 679.5,698.6 679.0,696.5 678.5,696.7 678.0,697.6 677.5,697.8 677.0,697.7 676.5,699.1 676.0,700.5 675.5,700.5 675.0,700.2 674.5,695.8 674.0,695.9 673.5,695.4 673.0,694.9 672.5,696.4 672.0,694.9 671.5,695.6 671.0,695.2 670.5,696.2 670.0,696.2 669.5,695.7 669.0,696.0 668.5,695.3 668.0,695.6 667.5,695.6 667.0,695.6 666.5,695.6 666.0,695.6 665.5,695.6 665.0,695.7 664.5,696.2 664.0,695.6 663.5,695.6 663.0,697.9 662.5,696.6 662.0,697.5 661.5,695.7 661.0,696.5 660.5,695.8 660.0,696.4 659.5,696.1 659.0,695.9 658.5,697.9 658.0,696.5 657.5,696.7 657.0,696.9 656.5,696.9 656.0,698.0 655.5,698.8 655.0,699.6 654.5,700.8 654.0,702.8 653.5,702.3 653.0,695.2 652.5,695.1 652.0,695.3 651.5,696.9 651.0,698.1 650.5,698.4 650.0,698.7 649.5,700.1 649.0,697.4 648.5,696.6 648.0,695.2 647.5,695.3 647.0,696.0 646.5,696.3 646.0,699.5 645.5,695.5 645.0,696.3 644.5,695.1 644.0,696.8 643.5,695.3 643.0,697.9 642.5,696.3 642.0,696.4 641.5,695.9 641.0,695.2 640.5,696.9 640.0,695.9 639.5,699.4 639.0,695.8 638.5,695.7 638.0,696.3 637.5,698.1 637.0,696.8 636.5,695.3 636.0,695.9 635.5,696.5 635.0,696.4 634.5,697.6 634.0,697.0 633.5,696.3 633.0,695.4 632.5,696.5 632.0,696.2 631.5,695.4 631.0,695.8 630.5,696.2 630.0,695.5 629.5,696.0 629.0,697.1 628.5,695.9 628.0,695.4 627.5,697.0 627.0,696.1 626.5,696.4 626.0,696.3 625.5,696.5 625.0,697.1 624.5,695.7 624.0,698.2 623.5,697.8 623.0,698.2 622.5,696.4 622.0,697.9 621.5,697.2 621.0,695.7 620.5,696.5 620.0,695.8 619.5,695.9 619.0,695.8 618.5,695.9 618.0,698.2 617.5,696.8 617.0,696.6 616.5,697.0 616.0,696.4 615.5,697.2 615.0,697.0 614.5,697.7 614.0,698.7 613.5,701.3 613.0,699.5 612.5,696.4 612.0,698.0 611.5,697.2 611.0,696.2 610.5,697.5 610.0,697.0 609.5,696.9 609.0,695.7 608.5,695.8 608.0,695.8 607.5,695.9 607.0,695.9 606.5,696.8 606.0,696.1 605.5,696.2 605.0,696.8 604.5,696.6 604.0,697.0 603.5,697.7 603.0,698.0 602.5,697.8 602.0,698.3 601.5,695.3 601.0,696.5 600.5,695.9 600.0,695.3 599.5,696.9 599.0,695.5 598.5,695.9 598.0,696.7 597.5,696.5 597.0,696.3 596.5,697.1 596.0,695.6 595.5,695.2 595.0,695.3 594.5,701.2 594.0,696.5 593.5,696.9 593.0,697.8 592.5,696.2 592.0,697.4 591.5,695.2 591.0,695.1 590.5,696.2 590.0,695.1 589.5,695.7 589.0,695.1 588.5,695.4 588.0,698.5 587.5,695.3 587.0,697.1 586.5,697.2 586.0,698.7 585.5,697.4 585.0,697.8 584.5,698.1 584.0,696.0 583.5,696.1 583.0,694.9 582.5,697.9 582.0,695.3 581.5,695.8 581.0,695.9 580.5,696.0 580.0,695.6 579.5,697.9 579.0,695.6 578.5,695.6 578.0,696.8 577.5,697.4 577.0,697.9 576.5,698.3 576.0,696.7 575.5,697.7 575.0,695.9 574.5,695.7 574.0,696.6 573.5,696.7 573.0,695.7 572.5,696.6 572.0,695.7 571.5,695.9 571.0,696.6 570.5,696.0 570.0,695.9 569.5,696.1 569.0,696.4 568.5,696.5 568.0,696.7 567.5,697.6 567.0,697.4 566.5,698.1 566.0,697.7 565.5,699.1 565.0,695.8 564.5,695.9 564.0,695.9 563.5,696.0 563.0,696.7 562.5,696.8 562.0,696.5 561.5,696.6 561.0,696.9 560.5,697.7 560.0,697.1 559.5,698.4 559.0,698.0 558.5,700.3 558.0,701.2 557.5,701.9 557.0,696.4 556.5,696.1 556.0,696.0 555.5,696.2 555.0,697.7 554.5,697.0 554.0,696.3 553.5,696.4 553.0,696.9 552.5,696.5 552.0,697.6 551.5,697.3 551.0,698.9 550.5,698.7 550.0,699.2 549.5,700.6 549.0,703.2 548.5,695.3 548.0,695.4 547.5,696.3 547.0,696.5 546.5,696.2 546.0,696.0 545.5,695.5 545.0,696.0 544.5,695.6 544.0,696.3 543.5,695.2 543.0,696.3 542.5,695.1 542.0,695.9 541.5,696.6 541.0,695.2 540.5,696.2 540.0,696.6 539.5,695.8 539.0,695.5 538.5,696.4 538.0,697.0 537.5,696.1 537.0,697.3 536.5,695.7 536.0,695.9 535.5,695.7 535.0,696.0 534.5,695.9 534.0,696.5 533.5,696.0 533.0,696.6 532.5,695.8 532.0,695.3 531.5,695.3 531.0,695.3 530.5,695.7 530.0,695.8 529.5,696.6 529.0,696.6 528.5,695.8 528.0,696.5 527.5,696.0 527.0,697.2 526.5,696.5 526.0,695.2 525.5,695.0 525.0,695.1 524.5,695.5 524.0,695.6 523.5,697.7 523.0,695.7 522.5,695.1 522.0,695.9 521.5,698.2 521.0,694.9 520.5,696.1 520.0,695.2 519.5,696.7 519.0,696.6 518.5,696.4 518.0,696.6 517.5,695.9 517.0,695.8 516.5,698.4 516.0,695.6 515.5,696.8 515.0,695.7 514.5,696.2 514.0,695.7 513.5,695.7 513.0,696.0 512.5,696.9 512.0,695.8 511.5,695.8 511.0,696.7 510.5,696.1 510.0,696.3 509.5,696.4 509.0,699.8 508.5,698.3 508.0,697.8 507.5,697.6 507.0,697.4 506.5,698.1 506.0,699.8 505.5,700.1 505.0,700.7 504.5,703.4 504.0,696.6 503.5,695.4 503.0,696.8 502.5,695.5 502.0,696.5 501.5,695.0 501.0,696.0 500.5,695.1 500.0,696.1 499.5,696.3 499.0,696.3 498.5,697.3 498.0,695.7 497.5,695.3 497.0,696.2 496.5,696.2 496.0,695.4 495.5,697.8 495.0,695.5 494.5,695.7 494.0,699.0 493.5,697.4 493.0,696.1 492.5,696.6 492.0,695.6 491.5,695.7 491.0,696.4 490.5,695.6 490.0,695.6 489.5,695.6 489.0,695.6 488.5,695.6 488.0,695.8 487.5,696.3 487.0,695.8 486.5,695.7 486.0,696.5 485.5,695.7 485.0,695.9 484.5,696.6 484.0,696.0 483.5,696.6 483.0,697.7 482.5,698.3 482.0,698.0 481.5,697.6 481.0,696.8 480.5,698.5 480.0,698.2 479.5,698.3 479.0,696.4 478.5,695.6 478.0,695.4 477.5,696.0 477.0,696.6 476.5,695.4 476.0,696.6 475.5,696.9 475.0,697.7 474.5,696.7 474.0,695.5 473.5,696.4 473.0,697.2 472.5,695.5 472.0,696.3 471.5,697.3 471.0,696.7 470.5,696.3 470.0,696.0 469.5,697.2 469.0,696.7 468.5,697.1 468.0,697.9 467.5,698.4 467.0,698.9 466.5,698.4 466.0,698.3 465.5,695.5 465.0,696.4 464.5,696.3 464.0,696.9 463.5,696.1 463.0,697.8 462.5,697.0 462.0,696.3 461.5,696.2 461.0,696.1 460.5,695.6 460.0,695.7 459.5,696.1 459.0,695.9 458.5,696.8 458.0,695.9 457.5,697.5 457.0,698.7 456.5,695.4 456.0,696.9 455.5,696.5 455.0,696.6 454.5,697.4 454.0,696.7 453.5,697.2 453.0,695.9 452.5,697.3 452.0,698.6 451.5,697.2 451.0,696.1 450.5,696.6 450.0,696.5 449.5,700.0 449.0,699.4 448.5,700.5 448.0,695.8 447.5,695.8 447.0,697.3 446.5,697.2 446.0,697.6 445.5,697.4 445.0,696.5 444.5,698.3 444.0,697.2 443.5,696.6 443.0,697.4 442.5,698.3 442.0,698.9 441.5,698.2 441.0,697.8 440.5,695.6 440.0,696.2 439.5,695.6 439.0,695.6 438.5,695.6 438.0,696.7 437.5,695.7 437.0,696.4 436.5,696.1 436.0,696.0 435.5,696.3 435.0,695.8 434.5,695.9 434.0,696.2 433.5,696.2 433.0,695.7 432.5,695.7 432.0,697.4 431.5,696.7 431.0,697.5 430.5,696.5 430.0,696.7 429.5,698.6 429.0,696.6 428.5,697.4 428.0,696.7 427.5,696.7 427.0,695.8 426.5,694.9 426.0,695.6 425.5,697.5 425.0,695.6 424.5,695.8 424.0,695.6 423.5,697.4 423.0,696.6 422.5,696.0 422.0,695.6 421.5,695.6 421.0,696.1 420.5,696.4 420.0,696.2 419.5,696.0 419.0,696.0 418.5,695.7 418.0,695.7 417.5,695.8 417.0,696.2 416.5,696.6 416.0,698.6 415.5,699.1 415.0,697.0 414.5,699.0 414.0,698.8 413.5,698.5 413.0,698.1 412.5,697.1 412.0,697.5 411.5,697.7 411.0,698.3 410.5,696.1 410.0,695.1 409.5,696.0 409.0,695.7 408.5,695.1 408.0,694.7 407.5,695.1 407.0,696.3 406.5,695.0 406.0,695.0 405.5,696.7 405.0,698.2 404.5,698.0 404.0,694.9 403.5,696.0 403.0,694.8 402.5,696.3 402.0,695.5 401.5,695.6 401.0,695.6 400.5,695.6 400.0,695.7 399.5,695.8 399.0,695.6 398.5,695.6 398.0,696.4 397.5,695.6 397.0,696.5 396.5,695.6 396.0,696.3 395.5,695.7 395.0,695.7 394.5,695.7 394.0,695.7 393.5,696.2 393.0,695.8 392.5,695.8 392.0,696.0 391.5,697.7 391.0,696.5 390.5,697.4 390.0,696.8 389.5,697.2 389.0,698.3 388.5,697.5 388.0,697.5 387.5,698.8 387.0,697.6 386.5,695.8 386.0,694.7 385.5,695.0 385.0,696.1 384.5,695.8 384.0,695.8 383.5,695.6 383.0,696.2 382.5,695.4 382.0,696.2 381.5,695.2 381.0,694.9 380.5,694.9 380.0,695.0 379.5,694.7 379.0,695.5 378.5,694.4 378.0,696.0 377.5,695.1 377.0,694.8 376.5,695.6 376.0,695.0 375.5,695.1 375.0,694.4 374.5,694.7 374.0,694.6 373.5,695.8 373.0,698.1 372.5,698.6 372.0,696.5 371.5,699.7 371.0,697.5 370.5,696.0 370.0,697.1 369.5,695.9 369.0,695.3 368.5,694.9 368.0,695.1 367.5,695.1 367.0,695.0 366.5,695.7 366.0,694.6 365.5,694.5 365.0,695.0 364.5,694.9 364.0,695.4 363.5,695.0 363.0,694.4 362.5,695.0 362.0,695.2 361.5,696.3 361.0,696.0 360.5,695.5 360.0,694.8 359.5,694.6 359.0,695.1 358.5,695.3 358.0,694.7 357.5,695.6 357.0,695.8 356.5,698.0 356.0,695.8 355.5,695.6 355.0,695.9 354.5,697.1 354.0,696.7 353.5,698.0 353.0,697.4 352.5,697.3 352.0,698.5 351.5,695.6 351.0,695.7 350.5,695.8 350.0,696.2 349.5,696.5 349.0,695.7 348.5,695.9 348.0,696.8 347.5,696.6 347.0,698.4 346.5,696.5 346.0,696.0 345.5,696.4 345.0,696.6 344.5,695.3 344.0,695.2 343.5,695.8 343.0,696.1 342.5,696.7 342.0,696.7 341.5,695.4 341.0,695.6 340.5,696.4 340.0,695.5 339.5,696.2 339.0,695.5 338.5,696.2 338.0,696.1 337.5,694.9 337.0,696.8 336.5,697.4 336.0,698.0 335.5,697.7 335.0,698.2 334.5,695.2 334.0,695.9 333.5,696.5 333.0,696.3 332.5,695.4 332.0,695.5 331.5,695.9 331.0,695.9 330.5,695.8 330.0,695.8 329.5,696.1 329.0,695.4 328.5,696.7 328.0,696.6 327.5,698.2 327.0,695.6 326.5,695.4 326.0,697.5 325.5,695.8 325.0,696.6 324.5,696.2 324.0,695.5 323.5,695.2 323.0,696.3 322.5,697.1 322.0,697.6 321.5,697.9 321.0,697.3 320.5,696.1 320.0,696.6 319.5,695.7 319.0,699.8 318.5,695.8 318.0,699.0 317.5,695.6 317.0,696.0 316.5,695.6 316.0,696.9 315.5,696.6 315.0,696.5 314.5,696.3 314.0,695.6 313.5,695.8 313.0,695.6 312.5,698.4 312.0,696.4 311.5,699.0 311.0,695.8 310.5,696.2 310.0,698.1 309.5,696.4 309.0,696.8 308.5,696.4 308.0,699.2 307.5,697.4 307.0,699.4 306.5,698.0 306.0,696.4 305.5,697.5 305.0,697.5 304.5,697.8 304.0,699.7 303.5,699.7 303.0,695.6 302.5,696.1 302.0,697.2 301.5,695.8 301.0,696.0 300.5,695.8 300.0,696.3 299.5,695.9 299.0,696.3 298.5,696.3 298.0,697.6 297.5,696.6 297.0,697.2 296.5,698.0 296.0,698.3 295.5,698.4 295.0,697.3 294.5,697.0 294.0,695.6 293.5,696.6 293.0,696.0 292.5,695.7 292.0,695.6 291.5,696.8 291.0,695.6 290.5,696.6 290.0,695.9 289.5,696.7 289.0,695.7 288.5,695.7 288.0,697.4 287.5,698.9 287.0,697.4 286.5,697.7 286.0,699.0 285.5,696.9 285.0,696.5 284.5,696.5 284.0,696.2 283.5,696.5 283.0,696.5 282.5,696.8 282.0,697.1 281.5,697.0 281.0,698.3 280.5,698.2 280.0,696.2 279.5,696.0 279.0,695.9 278.5,695.9 278.0,695.1 277.5,695.8 277.0,696.7 276.5,697.0 276.0,695.6 275.5,695.3 275.0,696.3 274.5,696.9 274.0,695.3 273.5,695.8 273.0,699.7 272.5,695.7 272.0,697.8 271.5,697.6 271.0,695.9 270.5,696.4 270.0,696.5 269.5,699.4 269.0,697.5 268.5,696.5 268.0,696.0 267.5,695.2 267.0,695.3 266.5,696.4 266.0,695.9 265.5,696.2 265.0,698.1 264.5,695.2 264.0,695.2 263.5,695.6 263.0,696.1 262.5,696.1 262.0,695.6 261.5,696.6 261.0,695.1 260.5,696.2 260.0,697.5 259.5,696.2 259.0,696.8 258.5,696.9 258.0,697.8 257.5,695.7 257.0,696.3 256.5,696.6 256.0,694.9 255.5,696.4 255.0,695.1 254.5,695.6 254.0,695.6 253.5,696.5 253.0,696.3 252.5,696.2 252.0,696.3 251.5,696.2 251.0,695.8 250.5,696.2 250.0,696.5 249.5,695.6 249.0,696.3 248.5,696.1 248.0,696.2 247.5,695.6 247.0,698.4 246.5,695.7 246.0,695.9 245.5,695.7 245.0,695.7 244.5,695.8 244.0,695.9 243.5,696.5 243.0,696.0 242.5,696.6 242.0,696.9 241.5,697.1 241.0,696.5 240.5,696.7 240.0,697.5 239.5,697.1 239.0,695.6 238.5,695.6 238.0,695.6 237.5,697.0 237.0,696.2 236.5,696.9 236.0,696.5 235.5,696.1 235.0,695.6 234.5,695.9 234.0,696.2 233.5,695.7 233.0,695.8 232.5,695.7 232.0,695.8 231.5,695.9 231.0,696.0 230.5,696.3 230.0,697.6 229.5,697.7 229.0,698.2 228.5,698.0 228.0,697.7 227.5,697.6 227.0,698.4 226.5,698.2 226.0,694.9 225.5,696.3 225.0,696.2 224.5,695.3 224.0,695.4 223.5,695.8 223.0,696.2 222.5,695.9 222.0,694.8 221.5,695.5 221.0,695.3 220.5,695.0 220.0,695.6 219.5,695.1 219.0,695.2 218.5,694.8 218.0,695.6 217.5,697.7 217.0,698.1 216.5,696.5 216.0,696.4 215.5,696.4 215.0,696.2 214.5,695.8 214.0,694.9 213.5,698.5 213.0,697.2 212.5,698.4 212.0,695.8 211.5,696.1 211.0,695.9 210.5,695.0 210.0,696.7 209.5,696.4 209.0,696.2 208.5,695.6 208.0,695.2 207.5,696.5 207.0,697.1 206.5,696.7 206.0,695.3 205.5,696.0 205.0,695.6 204.5,696.9 204.0,695.6 203.5,696.8 203.0,699.1 202.5,697.6 202.0,698.6 201.5,696.8 201.0,696.2 200.5,696.4 200.0,695.6 199.5,698.6 199.0,695.6 198.5,695.7 198.0,695.7 197.5,696.2 197.0,696.8 196.5,695.8 196.0,696.5 195.5,698.0 195.0,696.0 194.5,696.5 194.0,696.3 193.5,697.9 193.0,698.5 192.5,697.7 192.0,698.8 191.5,699.2 191.0,698.0 190.5,698.4 190.0,700.0 189.5,698.3 189.0,695.7 188.5,696.4 188.0,696.8 187.5,698.4 187.0,696.6 186.5,696.4 186.0,699.0 185.5,699.6 185.0,696.5 184.5,698.0 184.0,696.0 183.5,696.4 183.0,697.0 182.5,697.2 182.0,697.3 181.5,697.2 181.0,698.1 180.5,697.4 180.0,696.3 179.5,697.2 179.0,696.6 178.5,697.5 178.0,698.6 177.5,698.1 177.0,698.8 176.5,700.4 176.0,703.4 175.5,696.2 175.0,696.8 174.5,696.0 174.0,695.6 173.5,695.7 173.0,697.7 172.5,695.6 172.0,695.7 171.5,696.1 171.0,696.3 170.5,695.4 170.0,696.0 169.5,696.1 169.0,696.5 168.5,696.8 168.0,695.9 167.5,696.8 167.0,698.0 166.5,698.2 166.0,698.0 165.5,698.2 165.0,696.9 164.5,698.5 164.0,696.8 163.5,696.5 163.0,695.0 162.5,695.0 162.0,696.7 161.5,695.8 161.0,695.1 160.5,696.5 160.0,695.2 159.5,696.0 159.0,696.2 158.5,696.5 158.0,695.5 157.5,696.5 157.0,697.1 156.5,696.2 156.0,695.6 155.5,695.5 155.0,694.9 154.5,696.5 154.0,696.1 153.5,697.8 153.0,698.1 152.5,697.1 152.0,695.4 151.5,696.1 151.0,696.4 150.5,695.3 150.0,694.8 149.5,695.0 149.0,696.4 148.5,695.0 148.0,696.3 147.5,695.9 147.0,696.2 146.5,695.3 146.0,696.5 145.5,695.6 145.0,695.6 144.5,695.2 144.0,695.9 143.5,695.4 143.0,694.7 142.5,697.3 142.0,696.0 141.5,696.5 141.0,696.2 140.5,697.5 140.0,696.8 139.5,697.6 139.0,695.9 138.5,695.9 138.0,695.8 137.5,695.0 137.0,696.0 136.5,695.4 136.0,696.3 135.5,695.6 135.0,695.6 134.5,695.7 134.0,695.6 133.5,696.4 133.0,697.7 132.5,695.6 132.0,695.6 131.5,695.9 131.0,696.2 130.5,695.7 130.0,696.3 129.5,695.7 129.0,695.7 128.5,695.9 128.0,695.9 127.5,696.4 127.0,696.0 126.5,696.4 126.0,696.4 125.5,696.5 125.0,696.7 124.5,697.6 124.0,697.9 123.5,698.6 123.0,698.6 122.5,701.3 122.0,701.9 121.5,701.3 121.0,697.0 120.5,697.7 120.0,698.3 119.5,698.7 119.0,700.7 118.5,702.5 118.0,699.8 117.5,696.0 117.0,695.6 116.5,695.6 116.0,695.6 115.5,695.6 115.0,696.5 114.5,695.6 114.0,695.7 113.5,695.6 113.0,695.6 112.5,696.0 112.0,695.7 111.5,696.3 111.0,696.0 110.5,695.8 110.0,695.8 109.5,696.8 109.0,696.3 108.5,696.1 108.0,696.0 107.5,696.3 107.0,696.6 106.5,697.4 106.0,697.4 105.5,697.4 105.0,696.2 104.5,696.8 104.0,696.4 103.5,698.2 103.0,697.6 102.5,697.6 102.0,697.6 101.5,697.3 101.0,696.4 100.5,696.3 100.0,696.6 99.5,695.1 99.0,696.6 98.5,695.2 98.0,695.0 97.5,695.6 97.0,695.5 96.5,695.1 96.0,696.3 95.5,695.9 95.0,695.5 94.5,695.3 94.0,695.9 93.5,695.8 93.0,696.9 92.5,695.8 92.0,695.8 91.5,696.6 91.0,696.9 90.5,695.7 90.0,696.6 89.5,697.7 89.0,697.0 88.5,695.6 88.0,697.0 87.5,696.5 87.0,695.6 86.5,698.3 86.0,695.9 85.5,695.7 85.0,695.7 84.5,695.7 84.0,697.0 83.5,698.6 83.0,698.4 82.5,695.9 82.0,696.6 81.5,696.1 81.0,696.3 80.5,696.3 80.0,699.2 79.5,696.6 79.0,694.8 78.5,697.4 78.0,698.2 77.5,697.0 77.0,695.2 76.5,696.4 76.0,695.1 75.5,695.8 75.0,695.7 74.5,696.5 74.0,695.2 73.5,696.3 73.0,695.2 72.5,695.5 72.0,695.0 71.5,695.6 71.0,696.5 70.5,694.9 70.0,695.8 69.5,696.3 69.0,696.0 68.5,696.3 68.0,695.2 67.5,695.8 67.0,695.9 66.5,696.7 66.0,695.4 65.5,696.6 65.0,695.6 64.5,695.6 64.0,695.2 63.5,695.6 63.0,696.5 62.5,695.3 62.0,695.9 61.5,696.4 61.0,698.0 60.5,697.1 60.0,696.5 59.5,696.8 59.0,697.8 58.5,698.6 58.0,697.5 57.5,696.5 57.0,695.8 56.5,695.0 56.0,695.3 55.5,696.5 55.0,696.4 54.5,696.3 54.0,696.7 53.5,695.8 53.0,696.5 52.5,696.3 52.0,696.4 51.5,695.9 51.0,695.9 50.5,696.2 50.0,696.2 49.5,696.0 49.0,696.2 48.5,695.1 48.0,697.8 47.5,697.2 47.0,697.3 46.5,697.9 46.0,694.9 45.5,696.4 45.0,696.3 44.5,696.1 44.0,695.6 43.5,695.9 43.0,694.8 42.5,696.0 42.0,695.3 41.5,695.3 41.0,698.4 40.5,695.8 40.0,695.7 39.5,696.2 39.0,696.3 38.5,696.5 38.0,696.0 37.5,696.5 37.0,696.5 36.5,696.4 36.0,696.0 35.5,696.4 35.0,696.8 34.5,695.8 34.0,695.5 33.5,699.8 33.0,696.7 32.5,696.7 32.0,696.4 31.5,701.5 31.0,699.5 30.5,698.7 30.0,699.5 29.5,695.9 29.0,697.1 28.5,695.7 28.0,695.6 27.5,695.8 27.0,697.7 26.5,695.6 26.0,696.9 25.5,696.4 25.0,696.3 24.5,697.0 24.0,696.5 23.5,696.0 23.0,695.6 22.5,695.7 22.0,696.7 21.5,695.7 21.0,696.4 20.5,696.5 20.0,696.4 19.5,696.3 19.0,696.1 18.5,696.3 18.0,696.2 17.5,696.6 17.0,697.2 16.5,696.8 16.0,697.3 15.5,697.2 15.0,695.8 14.5,696.2 14.0,696.9 13.5,696.1 13.0,696.6 12.5,698.1 12.0,695.2 11.5,695.8 11.0,696.4 10.5,696.2 10.0,695.9 9.5,696.5 9.0,696.7 8.5,695.8 8.0,696.7 7.5,695.2 7.0,695.7"/><path d="M17.0 692V700.5M80.0 692V700.0M106.3 692V701.5M118.5 692V721.5M122.0 692V734.0M176.3 692V723.0M181.0 692V705.0M190.0 692V713.0M227.0 692V708.0M240.0 692V702.0M281.0 692V707.0M296.0 692V706.0M304.0 692V709.0M387.6 692V709.0M412.0 692V702.0M428.0 692V701.0M441.8 692V708.0M480.0 692V708.0M505.0 692V751.0M549.5 692V734.0M558.0 692V726.5M566.0 692V709.5M602.6 692V707.0M613.4 692V716.0M654.0 692V720.0M675.6 692V718.0M680.0 692V708.0M689.4 692V710.0M716.8 692V718.0M724.3 692V711.5M752.7 692V702.0M774.3 692V719.0M797.0 692V716.0M811.6 692V715.0M826.0 692V703.0M839.7 692V702.0M860.0 692V700.0M869.3 692V722.0M882.6 692V709.0M910.0 692V709.0M917.8 692V717.0M939.0 692V701.5M979.7 692V711.0M984.7 692V719.0M1008.3 692V720.0M1025.4 692V705.0M1042.5 692V716.0M1137.3 692V716.5M1140.3 692V713.0M1150.6 692V710.0M1173.7 692V716.0M1215.0 692V704.5M1229.4 692V703.0M1231.0 692V703.0M1234.4 692V723.0M1240.2 692V715.0M1290.9 692V719.5M1311.7 692V725.0M1355.6 692V715.0M1378.2 692V728.0" stroke="#0a0a0a" stroke-width="1.15" fill="none"/><path d="M120.90 694L123.10 694L122.45 712L121.55 712ZM504.10 694L505.90 694L505.45 716L504.55 716ZM548.50 694L550.50 694L549.95 712L549.05 712ZM557.10 694L558.90 694L558.45 708L557.55 708ZM1310.40 694L1313.00 694L1312.15 711L1311.25 711ZM1377.20 694L1379.20 694L1378.65 708L1377.75 708ZM175.50 694L177.10 694L176.75 706L175.85 706ZM868.50 694L870.10 694L869.75 706L868.85 706ZM1233.60 694L1235.20 694L1234.85 706L1233.95 706Z" fill="#0a0a0a"/><rect x="121.2" y="688.2" width="2.4" height="1.6" fill="#30d838"/><rect x="177" y="689" width="1" height="2.6" fill="#30d838"/><rect x="388" y="690.2" width="1" height="2.6" fill="#30d838"/><rect x="506" y="690" width="1" height="2.6" fill="#30d838"/><rect x="559.3" y="690" width="1" height="2.6" fill="#30d838"/><rect x="717.6" y="690" width="1" height="2.6" fill="#30d838"/><rect x="985.3" y="690" width="1" height="2.6" fill="#30d838"/><rect x="1042.8" y="690" width="1" height="2.6" fill="#30d838"/><rect x="1174.2" y="690" width="1" height="2.6" fill="#30d838"/><rect x="1291.6" y="689.4" width="1" height="2.6" fill="#30d838"/><rect x="1378.4" y="690" width="1" height="2.6" fill="#30d838"/></svg>
<div class="a" style="left:7px;top:49px;width:443px;height:31.5px;background:linear-gradient(#f6f6f6 0,#eeeeee 12%,#e6e6e6 35%,#d9d9d9 65%,#cccccc 88%,#c6c6c6 100%);"></div>
<div class="a" style="left:121.2px;top:53.8px;width:25px;height:25px;background:#b9d8f3;border:1.2px solid #1f80dc;box-sizing:border-box;"></div>
<div class="a" style="left:392.9px;top:53.9px;width:24.8px;height:24.8px;background:#b9d8f3;border:1.2px solid #1f80dc;box-sizing:border-box;"></div>
<svg style="left:0;top:0" width="460" height="90" viewBox="0 0 460 90"><defs>
<radialGradient id="gc" cx="0.5" cy="0.4" r="0.6"><stop offset="0" stop-color="#7ccf72"/><stop offset="1" stop-color="#3fa83c"/></radialGradient>
<linearGradient id="cam" x1="0" y1="0" x2="0" y2="1"><stop offset="0" stop-color="#a2a2a2"/><stop offset="0.45" stop-color="#7a7a7a"/><stop offset="1" stop-color="#565656"/></linearGradient>
<linearGradient id="ba" x1="0" y1="0" x2="0" y2="1"><stop offset="0" stop-color="#cfe4f7"/><stop offset="1" stop-color="#8fbce8"/></linearGradient>
</defs><rect x="9.3" y="59.0" width="2" height="2" fill="#8a8a8a"/><rect x="10.6" y="60.0" width="2.2" height="2.2" fill="#fff"/><rect x="9.3" y="63.5" width="2" height="2" fill="#8a8a8a"/><rect x="10.6" y="64.5" width="2.2" height="2.2" fill="#fff"/><rect x="9.3" y="68.0" width="2" height="2" fill="#8a8a8a"/><rect x="10.6" y="69.0" width="2.2" height="2.2" fill="#fff"/><circle cx="31.8" cy="66.2" r="7.6" fill="url(#gc)" stroke="#4cae48" stroke-width="0.8"/><circle cx="31.8" cy="66.2" r="6.2" fill="none" stroke="#9fdc98" stroke-width="0.7" opacity="0.7"/><path d="M28.7 66.9 L31.3 69.3 L35.7 64.4" fill="none" stroke="#fff" stroke-width="1.8" stroke-linecap="round" stroke-linejoin="round"/><rect x="49.699999999999996" y="57.2" width="1.1" height="17.599999999999994" fill="#b4b4b4"/><rect x="114.5" y="57.2" width="1.1" height="17.599999999999994" fill="#b4b4b4"/><rect x="385.79999999999995" y="57.2" width="1.1" height="17.599999999999994" fill="#b4b4b4"/><g transform="translate(60.2,0)"><rect x="6" y="59.3" width="6.9" height="3" rx="0.9" fill="#8a8a8a"/><rect x="8.2" y="60.3" width="3" height="1.3" fill="#e2b84c"/><rect x="0" y="61" width="18.1" height="11.8" rx="1.7" fill="url(#cam)"/><rect x="13.9" y="60.2" width="3.7" height="1.8" rx="0.6" fill="#5c5c5c"/><rect x="15" y="63.2" width="1.4" height="8.6" fill="#e0e0e0"/><rect x="3.5" y="62.9" width="7.8" height="8.4" rx="2.6" fill="#5f9be0"/></g><g transform="translate(87.4,0)"><rect x="6" y="59.3" width="6.9" height="3" rx="0.9" fill="#8a8a8a"/><rect x="8.2" y="60.3" width="3" height="1.3" fill="#e2b84c"/><rect x="0" y="61" width="18.1" height="11.8" rx="1.7" fill="url(#cam)"/><rect x="13.9" y="60.2" width="3.7" height="1.8" rx="0.6" fill="#5c5c5c"/><rect x="15" y="63.2" width="1.4" height="8.6" fill="#e0e0e0"/><rect x="3.5" y="62.9" width="7.8" height="8.4" rx="2.6" fill="#5f9be0"/><text x="9" y="74.8" font-family="Liberation Sans, sans-serif" font-size="8.4" font-weight="bold" fill="#242424" stroke="#d8d8d8" stroke-width="1.3" paint-order="stroke" textLength="9.6" lengthAdjust="spacingAndGlyphs">PS</text></g><path d="M129.8 58.6 L129.8 71.4 L132.8 68.7 L135.2 74.4 L137.4 73.4 L135 67.9 L139.3 67.9 Z" fill="#dedede" stroke="#9c9c9c" stroke-width="0.9" stroke-linejoin="round"/><path d="M161 58.5 L168 66.4 L164.3 66.4 L164.3 72.9 L157.8 72.9 L157.8 66.4 L154.1 66.4 Z" fill="#d4e6f8" stroke="#5f94cc" stroke-width="1.1" stroke-linejoin="round"/><path d="M161 63.6 L161 71.2" stroke="#6a9fd8" stroke-width="1.5" fill="none"/><path d="M159.2 64.4 L161 62 L162.8 64.4 Z" fill="#6a9fd8"/><path d="M188.1 73 L195.2 64.8 L191.5 64.8 L191.5 58.5 L185 58.5 L185 64.8 L181.2 64.8 Z" fill="#d4e6f8" stroke="#5f94cc" stroke-width="1.1" stroke-linejoin="round"/><path d="M188.1 60 L188.1 65.6" stroke="#6a9fd8" stroke-width="1.5" fill="none"/><path d="M185.9 66.6 L188.1 64.4 L190.3 66.6 L188.1 69.2 Z" fill="#5f94cc"/><path d="M206.5 57.3 L206.5 68" stroke="#5a5a5a" stroke-width="0.9" fill="none"/><path d="M223.6 62 L223.6 74.8" stroke="#5a5a5a" stroke-width="0.9" fill="none"/><path d="M207.6 73.2 C207.8 68 208.4 64.2 210.6 63.8 C213 63.6 214.6 66.6 217.2 66.8 C219.8 67 221.6 64.6 222.2 59" stroke="#3c3c3c" stroke-width="1.8" fill="none" stroke-linecap="round"/><path d="M233.4 66 L242.4 59.3 L251.4 66 L242.4 72.8 Z" fill="#eef5fc" stroke="#6ea6de" stroke-width="1.5" stroke-linejoin="round"/><path d="M235.6 66 L240.4 62.2 L240.4 69.8 Z M249.2 66 L244.4 62.2 L244.4 69.8 Z" fill="#72aae2"/><path d="M242.4 60.6 L240.6 62 L244.2 62 Z M242.4 71.5 L240.6 70 L244.2 70 Z" fill="#8dbae8"/><rect x="241.7" y="63.4" width="1.5" height="5.2" fill="#5a90cc"/><polygon points="273.57,66.54 269.84,70.27 264.56,70.27 260.83,66.54 260.83,61.26 264.56,57.53 269.84,57.53 273.57,61.26" fill="#ececec" fill-opacity="0.5" stroke="#d6a258" stroke-width="1.3" stroke-linejoin="round"/><path d="M270.50 69.80 L273.30 67.40 L278.00 72.00 L275.40 74.80 Z" fill="#ecca88" stroke="#d09848" stroke-width="0.9" stroke-linejoin="round"/><polygon points="344.69,67.46 341.06,71.09 335.94,71.09 332.31,67.46 332.31,62.34 335.94,58.71 341.06,58.71 344.69,62.34" fill="#ececec" fill-opacity="0.5" stroke="#d6a258" stroke-width="1.3" stroke-linejoin="round"/><path d="M341.70 70.60 L344.30 68.30 L348.30 71.80 L345.90 74.20 Z" fill="#e8cc90" stroke="#d09848" stroke-width="0.9" stroke-linejoin="round"/><path d="M337.30 67.60 h2.3 v-2.3 h2.5 v2.3 h2.3 v2.5 h-2.3 v2.3 h-2.5 v-2.3 h-2.3 Z" fill="#4fae4c" stroke="#3f9e40" stroke-width="0.5"/><polygon points="371.89,67.46 368.26,71.09 363.14,71.09 359.51,67.46 359.51,62.34 363.14,58.71 368.26,58.71 371.89,62.34" fill="#ececec" fill-opacity="0.5" stroke="#d6a258" stroke-width="1.3" stroke-linejoin="round"/><path d="M368.90 70.60 L371.50 68.30 L375.50 71.80 L373.10 74.20 Z" fill="#e8cc90" stroke="#d09848" stroke-width="0.9" stroke-linejoin="round"/><rect x="364.30" y="66.30" width="7.8" height="3.3" rx="0.6" fill="#f05860" stroke="#e04048" stroke-width="0.5"/><rect x="366.00" y="67.40" width="4.4" height="0.9" fill="#ffb0b0"/><path d="M287.8 58.6 L290.2 58.6 C291.6 60.6 292.6 66 293.4 71.8 C296.4 66.4 300.4 61.4 305.6 58.2" fill="none" stroke="#464646" stroke-width="1.6" stroke-linejoin="round" stroke-linecap="round"/><path d="M315.2 59.6 L317.6 62.2 L317.6 66" fill="none" stroke="#d09848" stroke-width="1.2" stroke-linecap="round"/><rect x="314.6" y="66" width="3.6" height="3.8" fill="#ee2030"/><path d="M315.6 70.4 L318 69.6 L321.8 73.2 L319.6 75.2 L316.6 73 Z" fill="#ecca88" stroke="#d09848" stroke-width="0.9" stroke-linejoin="round"/></svg>
<div class="t" style="left:397.3px;top:52.9px;width:16px;text-align:center;font-family:'Liberation Serif',serif;font-size:18.6px;line-height:26px;height:26px;color:#1c1c1c;">1</div>
<div class="t" style="left:425.6px;top:53.4px;width:14px;text-align:center;font-size:17.5px;line-height:26px;height:26px;color:#ff9c9c;">2</div>

</body></html>
